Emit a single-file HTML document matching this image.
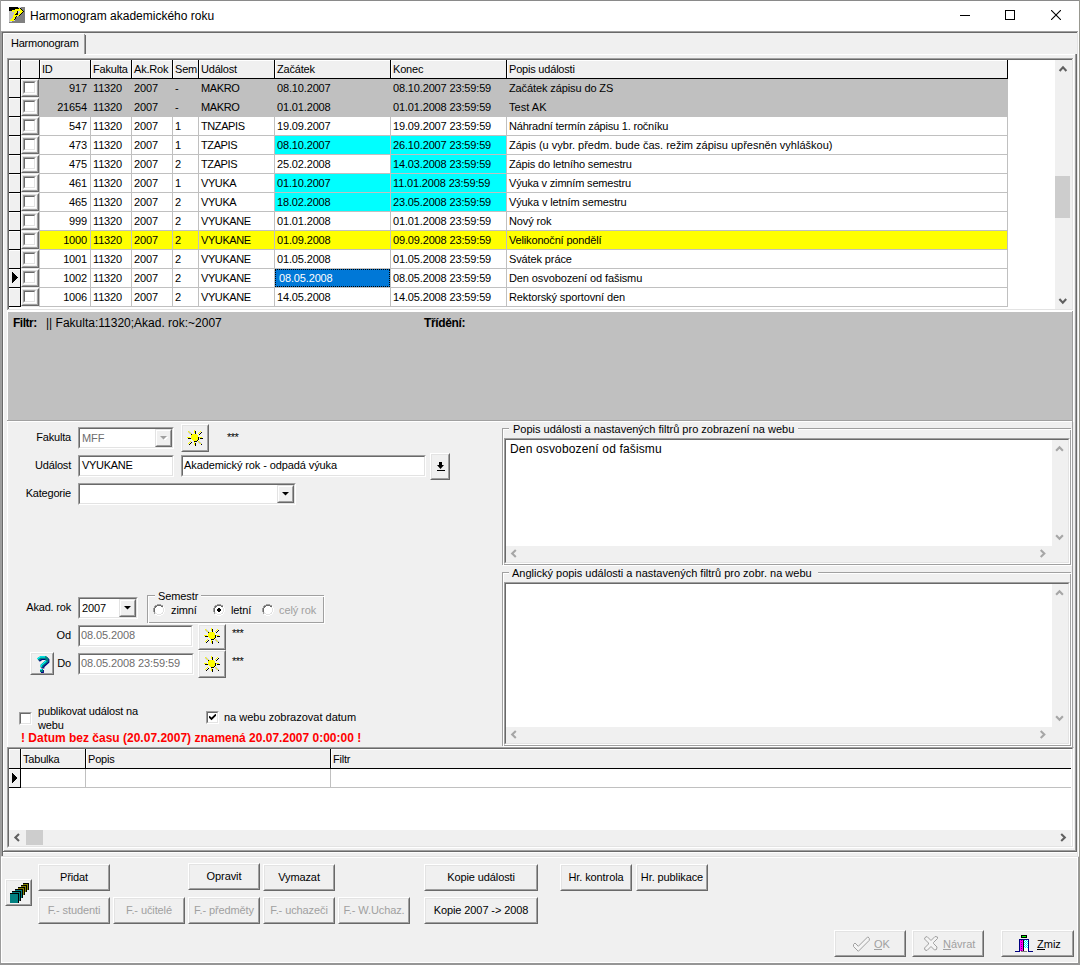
<!DOCTYPE html><html><head><meta charset="utf-8"><style>
html,body{margin:0;padding:0;width:1080px;height:965px;overflow:hidden;background:#f0f0f0}
body>div,body>svg{position:absolute;box-sizing:content-box}
.t{position:absolute;white-space:pre;font-family:"Liberation Sans",sans-serif;color:#000}
</style></head><body>
<div style="left:0px;top:0px;width:1080px;height:965px;background:#f0f0f0;"></div>
<div style="left:0px;top:0px;width:1080px;height:31px;background:#ffffff;"></div>
<div style="left:0px;top:0px;width:1080px;height:1px;background:#8a8a8a;"></div>
<div style="left:0px;top:0px;width:1px;height:965px;background:#9c9c9c;"></div>
<div style="left:1079px;top:0px;width:1px;height:965px;background:#989890;"></div>
<svg style="position:absolute;left:9px;top:7px" width="16" height="16" viewBox="0 0 16 16" shape-rendering="crispEdges"><path d="M0 0h1v1h-1zM1 0h1v1h-1zM2 0h1v1h-1zM3 0h1v1h-1zM4 0h1v1h-1zM5 0h1v1h-1zM6 0h1v1h-1zM7 0h1v1h-1zM8 0h1v1h-1zM0 1h1v1h-1zM1 1h1v1h-1zM2 1h1v1h-1zM3 1h1v1h-1zM4 1h1v1h-1zM5 1h1v1h-1zM6 1h1v1h-1zM7 1h1v1h-1zM8 1h1v1h-1zM9 1h1v1h-1zM11 1h1v1h-1zM0 2h1v1h-1zM1 2h1v1h-1zM2 2h1v1h-1zM3 2h1v1h-1zM4 2h1v1h-1zM5 2h1v1h-1zM12 2h1v1h-1zM0 3h1v1h-1zM1 3h1v1h-1zM2 3h1v1h-1zM13 3h1v1h-1zM8 4h1v1h-1zM14 4h1v1h-1zM8 5h1v1h-1zM13 5h1v1h-1zM7 6h1v1h-1zM8 6h1v1h-1zM12 6h1v1h-1zM6 7h1v1h-1zM7 7h1v1h-1zM8 7h1v1h-1zM11 7h1v1h-1zM10 8h1v1h-1zM7 9h1v1h-1zM6 10h1v1h-1zM6 11h1v1h-1zM5 12h1v1h-1z" fill="#000"/><path d="M10 1h1v1h-1zM6 2h1v1h-1zM7 2h1v1h-1zM8 2h1v1h-1zM9 2h1v1h-1zM10 2h1v1h-1zM11 2h1v1h-1zM3 3h1v1h-1zM4 3h1v1h-1zM5 3h1v1h-1zM6 3h1v1h-1zM7 3h1v1h-1zM8 3h1v1h-1zM9 3h1v1h-1zM10 3h1v1h-1zM11 3h1v1h-1zM12 3h1v1h-1zM3 4h1v1h-1zM4 4h1v1h-1zM6 4h1v1h-1zM7 4h1v1h-1zM11 4h1v1h-1zM12 4h1v1h-1zM13 4h1v1h-1zM5 5h1v1h-1zM6 5h1v1h-1zM7 5h1v1h-1zM11 5h1v1h-1zM12 5h1v1h-1zM5 6h1v1h-1zM6 6h1v1h-1zM10 6h1v1h-1zM11 6h1v1h-1zM5 7h1v1h-1zM9 7h1v1h-1zM10 7h1v1h-1zM4 8h1v1h-1zM5 8h1v1h-1zM6 8h1v1h-1zM7 8h1v1h-1zM8 8h1v1h-1zM9 8h1v1h-1zM4 9h1v1h-1zM5 9h1v1h-1zM6 9h1v1h-1zM4 10h1v1h-1zM5 10h1v1h-1zM3 11h1v1h-1zM4 11h1v1h-1zM5 11h1v1h-1zM2 12h1v1h-1zM3 12h1v1h-1zM4 12h1v1h-1zM1 13h1v1h-1zM2 13h1v1h-1zM3 13h1v1h-1zM4 13h1v1h-1z" fill="#ffff00"/><path d="M0 4h1v1h-1zM1 4h1v1h-1zM2 4h1v1h-1zM5 4h1v1h-1zM0 5h1v1h-1zM1 5h1v1h-1zM2 5h1v1h-1zM3 5h1v1h-1zM4 5h1v1h-1zM0 6h1v1h-1zM1 6h1v1h-1zM2 6h1v1h-1zM3 6h1v1h-1zM4 6h1v1h-1zM0 7h1v1h-1zM1 7h1v1h-1zM2 7h1v1h-1zM3 7h1v1h-1zM4 7h1v1h-1zM0 8h1v1h-1zM1 8h1v1h-1zM2 8h1v1h-1zM3 8h1v1h-1zM0 9h1v1h-1zM1 9h1v1h-1zM2 9h1v1h-1zM3 9h1v1h-1zM0 10h1v1h-1zM1 10h1v1h-1zM2 10h1v1h-1zM3 10h1v1h-1zM0 11h1v1h-1zM1 11h1v1h-1zM2 11h1v1h-1zM0 12h1v1h-1zM1 12h1v1h-1zM0 13h1v1h-1zM0 14h1v1h-1z" fill="#c0c0c0"/><path d="M12 0h1v1h-1zM13 0h1v1h-1zM14 0h1v1h-1zM15 0h1v1h-1zM12 1h1v1h-1zM13 1h1v1h-1zM14 1h1v1h-1zM15 1h1v1h-1zM13 2h1v1h-1zM14 2h1v1h-1zM15 2h1v1h-1zM14 3h1v1h-1zM15 3h1v1h-1zM15 4h1v1h-1zM14 5h1v1h-1zM15 5h1v1h-1zM13 6h1v1h-1zM14 6h1v1h-1zM15 6h1v1h-1zM12 7h1v1h-1zM13 7h1v1h-1zM14 7h1v1h-1zM15 7h1v1h-1zM11 8h1v1h-1zM12 8h1v1h-1zM13 8h1v1h-1zM14 8h1v1h-1zM15 8h1v1h-1zM9 9h1v1h-1zM10 9h1v1h-1zM11 9h1v1h-1zM12 9h1v1h-1zM13 9h1v1h-1zM14 9h1v1h-1zM15 9h1v1h-1zM7 10h1v1h-1zM8 10h1v1h-1zM9 10h1v1h-1zM10 10h1v1h-1zM11 10h1v1h-1zM12 10h1v1h-1zM13 10h1v1h-1zM14 10h1v1h-1zM15 10h1v1h-1zM7 11h1v1h-1zM8 11h1v1h-1zM9 11h1v1h-1zM10 11h1v1h-1zM11 11h1v1h-1zM12 11h1v1h-1zM13 11h1v1h-1zM14 11h1v1h-1zM15 11h1v1h-1zM6 12h1v1h-1zM7 12h1v1h-1zM8 12h1v1h-1zM9 12h1v1h-1zM10 12h1v1h-1zM11 12h1v1h-1zM12 12h1v1h-1zM13 12h1v1h-1zM14 12h1v1h-1zM15 12h1v1h-1zM6 13h1v1h-1zM7 13h1v1h-1zM8 13h1v1h-1zM9 13h1v1h-1zM10 13h1v1h-1zM11 13h1v1h-1zM12 13h1v1h-1zM13 13h1v1h-1zM14 13h1v1h-1zM15 13h1v1h-1zM3 14h1v1h-1zM4 14h1v1h-1zM5 14h1v1h-1zM6 14h1v1h-1zM7 14h1v1h-1zM8 14h1v1h-1zM9 14h1v1h-1zM10 14h1v1h-1zM11 14h1v1h-1zM12 14h1v1h-1zM13 14h1v1h-1zM14 14h1v1h-1zM15 14h1v1h-1zM0 15h1v1h-1zM1 15h1v1h-1zM2 15h1v1h-1zM3 15h1v1h-1zM4 15h1v1h-1zM5 15h1v1h-1zM6 15h1v1h-1zM7 15h1v1h-1zM8 15h1v1h-1zM9 15h1v1h-1zM10 15h1v1h-1zM11 15h1v1h-1zM12 15h1v1h-1zM13 15h1v1h-1zM14 15h1v1h-1zM15 15h1v1h-1z" fill="#808080"/><path d="M9 0h1v1h-1zM10 0h1v1h-1zM11 0h1v1h-1zM9 4h1v1h-1zM10 4h1v1h-1zM9 5h1v1h-1zM10 5h1v1h-1zM9 6h1v1h-1zM8 9h1v1h-1zM5 13h1v1h-1zM1 14h1v1h-1zM2 14h1v1h-1z" fill="#c8c8e8"/></svg>
<div class="t" style="left:30px;top:10px;font-size:12px;line-height:12px;color:#000;font-weight:normal;">Harmonogram akademického roku</div>
<div style="left:960px;top:15px;width:10px;height:1px;background:#000;"></div>
<div style="left:1005px;top:10px;width:8px;height:8px;border:1px solid #000"></div>
<svg style="position:absolute;left:1051px;top:10px" width="10" height="10" viewBox="0 0 10 10" shape-rendering="crispEdges"><g shape-rendering="geometricPrecision"><path d="M0 0 L10 10 M10 0 L0 10" stroke="#000" stroke-width="1.1"/></g></svg>
<div style="left:1px;top:31px;width:1078px;height:1px;background:#a0a0a0;"></div>
<div style="left:2px;top:32px;width:1076px;height:1px;background:#696969;"></div>
<div style="left:1px;top:31px;width:1px;height:934px;background:#a0a0a0;"></div>
<div style="left:2px;top:32px;width:1px;height:932px;background:#696969;"></div>
<div style="left:1078px;top:31px;width:1px;height:934px;background:#ffffff;"></div>
<div style="left:1077px;top:32px;width:1px;height:932px;background:#e3e3e3;"></div>
<div style="left:3px;top:54px;width:1074px;height:1px;background:#ffffff;"></div>
<div style="left:3px;top:54px;width:1px;height:797px;background:#ffffff;"></div>
<div style="left:1075px;top:54px;width:1px;height:797px;background:#a0a0a0;"></div>
<div style="left:1076px;top:54px;width:1px;height:798px;background:#696969;"></div>
<div style="left:4px;top:850px;width:1072px;height:1px;background:#a0a0a0;"></div>
<div style="left:3px;top:851px;width:1074px;height:1px;background:#696969;"></div>
<div style="left:4px;top:34px;width:81px;height:21px;background:#f0f0f0;"></div>
<div style="left:4px;top:33px;width:80px;height:1px;background:#ffffff;"></div>
<div style="left:3px;top:34px;width:1px;height:21px;background:#ffffff;"></div>
<div style="left:84px;top:34px;width:1px;height:20px;background:#a0a0a0;"></div>
<div style="left:85px;top:35px;width:1px;height:19px;background:#696969;"></div>
<div class="t" style="left:11px;top:38px;font-size:11px;line-height:11px;color:#000;font-weight:normal;letter-spacing:-0.25px;">Harmonogram</div>
<div style="left:7px;top:58px;width:1067px;height:1px;background:#a0a0a0;"></div>
<div style="left:7px;top:58px;width:1px;height:252px;background:#a0a0a0;"></div>
<div style="left:8px;top:59px;width:1065px;height:1px;background:#696969;"></div>
<div style="left:8px;top:59px;width:1px;height:250px;background:#696969;"></div>
<div style="left:8px;top:309px;width:1065px;height:1px;background:#e3e3e3;"></div>
<div style="left:1072px;top:59px;width:1px;height:251px;background:#e3e3e3;"></div>
<div style="left:7px;top:310px;width:1067px;height:1px;background:#ffffff;"></div>
<div style="left:1073px;top:58px;width:1px;height:253px;background:#ffffff;"></div>
<div style="left:9px;top:60px;width:1046px;height:249px;background:#ffffff;"></div>
<div style="left:9px;top:60px;width:11px;height:18px;background:#f0f0f0;"></div>
<div style="left:9px;top:60px;width:11px;height:1px;background:#ffffff;"></div>
<div style="left:9px;top:60px;width:1px;height:18px;background:#ffffff;"></div>
<div style="left:20px;top:60px;width:1px;height:19px;background:#000;"></div>
<div style="left:21px;top:60px;width:18px;height:18px;background:#f0f0f0;"></div>
<div style="left:21px;top:60px;width:18px;height:1px;background:#ffffff;"></div>
<div style="left:21px;top:60px;width:1px;height:18px;background:#ffffff;"></div>
<div style="left:39px;top:60px;width:1px;height:19px;background:#000;"></div>
<div style="left:40px;top:60px;width:50px;height:18px;background:#f0f0f0;"></div>
<div style="left:40px;top:60px;width:50px;height:1px;background:#ffffff;"></div>
<div style="left:40px;top:60px;width:1px;height:18px;background:#ffffff;"></div>
<div style="left:90px;top:60px;width:1px;height:19px;background:#000;"></div>
<div class="t" style="left:42px;top:64px;font-size:11px;line-height:11px;color:#000;font-weight:normal;letter-spacing:-0.2px;">ID</div>
<div style="left:91px;top:60px;width:40px;height:18px;background:#f0f0f0;"></div>
<div style="left:91px;top:60px;width:40px;height:1px;background:#ffffff;"></div>
<div style="left:91px;top:60px;width:1px;height:18px;background:#ffffff;"></div>
<div style="left:131px;top:60px;width:1px;height:19px;background:#000;"></div>
<div class="t" style="left:93px;top:64px;font-size:11px;line-height:11px;color:#000;font-weight:normal;letter-spacing:-0.2px;">Fakulta</div>
<div style="left:132px;top:60px;width:40px;height:18px;background:#f0f0f0;"></div>
<div style="left:132px;top:60px;width:40px;height:1px;background:#ffffff;"></div>
<div style="left:132px;top:60px;width:1px;height:18px;background:#ffffff;"></div>
<div style="left:172px;top:60px;width:1px;height:19px;background:#000;"></div>
<div class="t" style="left:134px;top:64px;font-size:11px;line-height:11px;color:#000;font-weight:normal;letter-spacing:-0.2px;">Ak.Rok</div>
<div style="left:173px;top:60px;width:25px;height:18px;background:#f0f0f0;"></div>
<div style="left:173px;top:60px;width:25px;height:1px;background:#ffffff;"></div>
<div style="left:173px;top:60px;width:1px;height:18px;background:#ffffff;"></div>
<div style="left:198px;top:60px;width:1px;height:19px;background:#000;"></div>
<div class="t" style="left:175px;top:64px;font-size:11px;line-height:11px;color:#000;font-weight:normal;letter-spacing:-0.2px;">Sem</div>
<div style="left:199px;top:60px;width:75px;height:18px;background:#f0f0f0;"></div>
<div style="left:199px;top:60px;width:75px;height:1px;background:#ffffff;"></div>
<div style="left:199px;top:60px;width:1px;height:18px;background:#ffffff;"></div>
<div style="left:274px;top:60px;width:1px;height:19px;background:#000;"></div>
<div class="t" style="left:201px;top:64px;font-size:11px;line-height:11px;color:#000;font-weight:normal;letter-spacing:-0.2px;">Událost</div>
<div style="left:275px;top:60px;width:115px;height:18px;background:#f0f0f0;"></div>
<div style="left:275px;top:60px;width:115px;height:1px;background:#ffffff;"></div>
<div style="left:275px;top:60px;width:1px;height:18px;background:#ffffff;"></div>
<div style="left:390px;top:60px;width:1px;height:19px;background:#000;"></div>
<div class="t" style="left:277px;top:64px;font-size:11px;line-height:11px;color:#000;font-weight:normal;letter-spacing:-0.2px;">Začátek</div>
<div style="left:391px;top:60px;width:115px;height:18px;background:#f0f0f0;"></div>
<div style="left:391px;top:60px;width:115px;height:1px;background:#ffffff;"></div>
<div style="left:391px;top:60px;width:1px;height:18px;background:#ffffff;"></div>
<div style="left:506px;top:60px;width:1px;height:19px;background:#000;"></div>
<div class="t" style="left:393px;top:64px;font-size:11px;line-height:11px;color:#000;font-weight:normal;letter-spacing:-0.2px;">Konec</div>
<div style="left:507px;top:60px;width:500px;height:18px;background:#f0f0f0;"></div>
<div style="left:507px;top:60px;width:500px;height:1px;background:#ffffff;"></div>
<div style="left:507px;top:60px;width:1px;height:18px;background:#ffffff;"></div>
<div style="left:1007px;top:60px;width:1px;height:19px;background:#000;"></div>
<div class="t" style="left:509px;top:64px;font-size:11px;line-height:11px;color:#000;font-weight:normal;letter-spacing:-0.2px;">Popis události</div>
<div style="left:9px;top:78px;width:999px;height:1px;background:#000;"></div>
<div style="left:40px;top:79px;width:967px;height:18px;background:#c0c0c0;"></div>
<div style="left:39px;top:97px;width:969px;height:1px;background:#c0c0c0;"></div>
<div style="left:39px;top:79px;width:1px;height:19px;background:#c0c0c0;"></div>
<div style="left:90px;top:79px;width:1px;height:19px;background:#c0c0c0;"></div>
<div style="left:131px;top:79px;width:1px;height:19px;background:#c0c0c0;"></div>
<div style="left:172px;top:79px;width:1px;height:19px;background:#c0c0c0;"></div>
<div style="left:198px;top:79px;width:1px;height:19px;background:#c0c0c0;"></div>
<div style="left:274px;top:79px;width:1px;height:19px;background:#c0c0c0;"></div>
<div style="left:390px;top:79px;width:1px;height:19px;background:#c0c0c0;"></div>
<div style="left:506px;top:79px;width:1px;height:19px;background:#c0c0c0;"></div>
<div style="left:1007px;top:79px;width:1px;height:19px;background:#c0c0c0;"></div>
<div style="left:9px;top:79px;width:11px;height:18px;background:#f0f0f0;"></div>
<div style="left:9px;top:79px;width:11px;height:1px;background:#fff;"></div>
<div style="left:9px;top:79px;width:1px;height:18px;background:#fff;"></div>
<div style="left:20px;top:79px;width:1px;height:19px;background:#000;"></div>
<div style="left:9px;top:97px;width:12px;height:1px;background:#000;"></div>
<div style="left:21px;top:79px;width:18px;height:19px;background:#f0f0f0;"></div>
<div style="left:21px;top:79px;width:16px;height:16px;border:1px solid;border-color:#fff #696969 #696969 #fff;background:#f0f0f0"></div>
<div style="left:22px;top:80px;width:14px;height:14px;border:1px solid;border-color:#e3e3e3 #a0a0a0 #a0a0a0 #e3e3e3;background:#f0f0f0"></div>
<div style="left:21px;top:97px;width:18px;height:1px;background:#e8e8e8;"></div>
<div style="left:23px;top:81px;width:11px;height:11px;border:1px solid;border-color:#a0a0a0 #fff #fff #a0a0a0;background:#fff"></div>
<div style="left:24px;top:82px;width:9px;height:9px;border:1px solid;border-color:#696969 #e3e3e3 #e3e3e3 #696969;background:#fff"></div>
<div class="t" style="right:993px;top:83px;font-size:11px;line-height:11px;color:#000;letter-spacing:-0.15px;">917</div>
<div class="t" style="left:93px;top:83px;font-size:11px;line-height:11px;color:#000;font-weight:normal;letter-spacing:-0.15px;">11320</div>
<div class="t" style="left:134px;top:83px;font-size:11px;line-height:11px;color:#000;font-weight:normal;letter-spacing:-0.15px;">2007</div>
<div class="t" style="left:175px;top:83px;font-size:11px;line-height:11px;color:#000;font-weight:normal;letter-spacing:-0.15px;">-</div>
<div class="t" style="left:201px;top:83px;font-size:11px;line-height:11px;color:#000;font-weight:normal;letter-spacing:-0.4px;">MAKRO</div>
<div class="t" style="left:277px;top:83px;font-size:11px;line-height:11px;color:#000;font-weight:normal;letter-spacing:-0.15px;">08.10.2007</div>
<div class="t" style="left:393px;top:83px;font-size:11px;line-height:11px;color:#000;font-weight:normal;letter-spacing:-0.15px;">08.10.2007 23:59:59</div>
<div class="t" style="left:509px;top:83px;font-size:11px;line-height:11px;color:#000;font-weight:normal;letter-spacing:-0.11px;">Začátek zápisu do ZS</div>
<div style="left:40px;top:98px;width:967px;height:18px;background:#c0c0c0;"></div>
<div style="left:39px;top:116px;width:969px;height:1px;background:#c0c0c0;"></div>
<div style="left:39px;top:98px;width:1px;height:19px;background:#c0c0c0;"></div>
<div style="left:90px;top:98px;width:1px;height:19px;background:#c0c0c0;"></div>
<div style="left:131px;top:98px;width:1px;height:19px;background:#c0c0c0;"></div>
<div style="left:172px;top:98px;width:1px;height:19px;background:#c0c0c0;"></div>
<div style="left:198px;top:98px;width:1px;height:19px;background:#c0c0c0;"></div>
<div style="left:274px;top:98px;width:1px;height:19px;background:#c0c0c0;"></div>
<div style="left:390px;top:98px;width:1px;height:19px;background:#c0c0c0;"></div>
<div style="left:506px;top:98px;width:1px;height:19px;background:#c0c0c0;"></div>
<div style="left:1007px;top:98px;width:1px;height:19px;background:#c0c0c0;"></div>
<div style="left:9px;top:98px;width:11px;height:18px;background:#f0f0f0;"></div>
<div style="left:9px;top:98px;width:11px;height:1px;background:#fff;"></div>
<div style="left:9px;top:98px;width:1px;height:18px;background:#fff;"></div>
<div style="left:20px;top:98px;width:1px;height:19px;background:#000;"></div>
<div style="left:9px;top:116px;width:12px;height:1px;background:#000;"></div>
<div style="left:21px;top:98px;width:18px;height:19px;background:#f0f0f0;"></div>
<div style="left:21px;top:98px;width:16px;height:16px;border:1px solid;border-color:#fff #696969 #696969 #fff;background:#f0f0f0"></div>
<div style="left:22px;top:99px;width:14px;height:14px;border:1px solid;border-color:#e3e3e3 #a0a0a0 #a0a0a0 #e3e3e3;background:#f0f0f0"></div>
<div style="left:21px;top:116px;width:18px;height:1px;background:#e8e8e8;"></div>
<div style="left:23px;top:100px;width:11px;height:11px;border:1px solid;border-color:#a0a0a0 #fff #fff #a0a0a0;background:#fff"></div>
<div style="left:24px;top:101px;width:9px;height:9px;border:1px solid;border-color:#696969 #e3e3e3 #e3e3e3 #696969;background:#fff"></div>
<div class="t" style="right:993px;top:102px;font-size:11px;line-height:11px;color:#000;letter-spacing:-0.15px;">21654</div>
<div class="t" style="left:93px;top:102px;font-size:11px;line-height:11px;color:#000;font-weight:normal;letter-spacing:-0.15px;">11320</div>
<div class="t" style="left:134px;top:102px;font-size:11px;line-height:11px;color:#000;font-weight:normal;letter-spacing:-0.15px;">2007</div>
<div class="t" style="left:175px;top:102px;font-size:11px;line-height:11px;color:#000;font-weight:normal;letter-spacing:-0.15px;">-</div>
<div class="t" style="left:201px;top:102px;font-size:11px;line-height:11px;color:#000;font-weight:normal;letter-spacing:-0.4px;">MAKRO</div>
<div class="t" style="left:277px;top:102px;font-size:11px;line-height:11px;color:#000;font-weight:normal;letter-spacing:-0.15px;">01.01.2008</div>
<div class="t" style="left:393px;top:102px;font-size:11px;line-height:11px;color:#000;font-weight:normal;letter-spacing:-0.15px;">01.01.2008 23:59:59</div>
<div class="t" style="left:509px;top:102px;font-size:11px;line-height:11px;color:#000;font-weight:normal;letter-spacing:0.04px;">Test AK</div>
<div style="left:40px;top:117px;width:967px;height:18px;background:#ffffff;"></div>
<div style="left:39px;top:135px;width:969px;height:1px;background:#c0c0c0;"></div>
<div style="left:39px;top:117px;width:1px;height:19px;background:#c0c0c0;"></div>
<div style="left:90px;top:117px;width:1px;height:19px;background:#c0c0c0;"></div>
<div style="left:131px;top:117px;width:1px;height:19px;background:#c0c0c0;"></div>
<div style="left:172px;top:117px;width:1px;height:19px;background:#c0c0c0;"></div>
<div style="left:198px;top:117px;width:1px;height:19px;background:#c0c0c0;"></div>
<div style="left:274px;top:117px;width:1px;height:19px;background:#c0c0c0;"></div>
<div style="left:390px;top:117px;width:1px;height:19px;background:#c0c0c0;"></div>
<div style="left:506px;top:117px;width:1px;height:19px;background:#c0c0c0;"></div>
<div style="left:1007px;top:117px;width:1px;height:19px;background:#c0c0c0;"></div>
<div style="left:9px;top:117px;width:11px;height:18px;background:#f0f0f0;"></div>
<div style="left:9px;top:117px;width:11px;height:1px;background:#fff;"></div>
<div style="left:9px;top:117px;width:1px;height:18px;background:#fff;"></div>
<div style="left:20px;top:117px;width:1px;height:19px;background:#000;"></div>
<div style="left:9px;top:135px;width:12px;height:1px;background:#000;"></div>
<div style="left:21px;top:117px;width:18px;height:19px;background:#f0f0f0;"></div>
<div style="left:21px;top:117px;width:16px;height:16px;border:1px solid;border-color:#fff #696969 #696969 #fff;background:#f0f0f0"></div>
<div style="left:22px;top:118px;width:14px;height:14px;border:1px solid;border-color:#e3e3e3 #a0a0a0 #a0a0a0 #e3e3e3;background:#f0f0f0"></div>
<div style="left:21px;top:135px;width:18px;height:1px;background:#e8e8e8;"></div>
<div style="left:23px;top:119px;width:11px;height:11px;border:1px solid;border-color:#a0a0a0 #fff #fff #a0a0a0;background:#fff"></div>
<div style="left:24px;top:120px;width:9px;height:9px;border:1px solid;border-color:#696969 #e3e3e3 #e3e3e3 #696969;background:#fff"></div>
<div class="t" style="right:993px;top:121px;font-size:11px;line-height:11px;color:#000;letter-spacing:-0.15px;">547</div>
<div class="t" style="left:93px;top:121px;font-size:11px;line-height:11px;color:#000;font-weight:normal;letter-spacing:-0.15px;">11320</div>
<div class="t" style="left:134px;top:121px;font-size:11px;line-height:11px;color:#000;font-weight:normal;letter-spacing:-0.15px;">2007</div>
<div class="t" style="left:175px;top:121px;font-size:11px;line-height:11px;color:#000;font-weight:normal;letter-spacing:-0.15px;">1</div>
<div class="t" style="left:201px;top:121px;font-size:11px;line-height:11px;color:#000;font-weight:normal;letter-spacing:-0.4px;">TNZAPIS</div>
<div class="t" style="left:277px;top:121px;font-size:11px;line-height:11px;color:#000;font-weight:normal;letter-spacing:-0.15px;">19.09.2007</div>
<div class="t" style="left:393px;top:121px;font-size:11px;line-height:11px;color:#000;font-weight:normal;letter-spacing:-0.15px;">19.09.2007 23:59:59</div>
<div class="t" style="left:509px;top:121px;font-size:11px;line-height:11px;color:#000;font-weight:normal;letter-spacing:-0.2px;">Náhradní termín zápisu 1. ročníku</div>
<div style="left:40px;top:136px;width:967px;height:18px;background:#ffffff;"></div>
<div style="left:39px;top:154px;width:969px;height:1px;background:#c0c0c0;"></div>
<div style="left:39px;top:136px;width:1px;height:19px;background:#c0c0c0;"></div>
<div style="left:90px;top:136px;width:1px;height:19px;background:#c0c0c0;"></div>
<div style="left:131px;top:136px;width:1px;height:19px;background:#c0c0c0;"></div>
<div style="left:172px;top:136px;width:1px;height:19px;background:#c0c0c0;"></div>
<div style="left:198px;top:136px;width:1px;height:19px;background:#c0c0c0;"></div>
<div style="left:274px;top:136px;width:1px;height:19px;background:#c0c0c0;"></div>
<div style="left:390px;top:136px;width:1px;height:19px;background:#c0c0c0;"></div>
<div style="left:506px;top:136px;width:1px;height:19px;background:#c0c0c0;"></div>
<div style="left:1007px;top:136px;width:1px;height:19px;background:#c0c0c0;"></div>
<div style="left:275px;top:136px;width:115px;height:18px;background:#00ffff;"></div>
<div style="left:391px;top:136px;width:115px;height:18px;background:#00ffff;"></div>
<div style="left:9px;top:136px;width:11px;height:18px;background:#f0f0f0;"></div>
<div style="left:9px;top:136px;width:11px;height:1px;background:#fff;"></div>
<div style="left:9px;top:136px;width:1px;height:18px;background:#fff;"></div>
<div style="left:20px;top:136px;width:1px;height:19px;background:#000;"></div>
<div style="left:9px;top:154px;width:12px;height:1px;background:#000;"></div>
<div style="left:21px;top:136px;width:18px;height:19px;background:#f0f0f0;"></div>
<div style="left:21px;top:136px;width:16px;height:16px;border:1px solid;border-color:#fff #696969 #696969 #fff;background:#f0f0f0"></div>
<div style="left:22px;top:137px;width:14px;height:14px;border:1px solid;border-color:#e3e3e3 #a0a0a0 #a0a0a0 #e3e3e3;background:#f0f0f0"></div>
<div style="left:21px;top:154px;width:18px;height:1px;background:#e8e8e8;"></div>
<div style="left:23px;top:138px;width:11px;height:11px;border:1px solid;border-color:#a0a0a0 #fff #fff #a0a0a0;background:#fff"></div>
<div style="left:24px;top:139px;width:9px;height:9px;border:1px solid;border-color:#696969 #e3e3e3 #e3e3e3 #696969;background:#fff"></div>
<div class="t" style="right:993px;top:140px;font-size:11px;line-height:11px;color:#000;letter-spacing:-0.15px;">473</div>
<div class="t" style="left:93px;top:140px;font-size:11px;line-height:11px;color:#000;font-weight:normal;letter-spacing:-0.15px;">11320</div>
<div class="t" style="left:134px;top:140px;font-size:11px;line-height:11px;color:#000;font-weight:normal;letter-spacing:-0.15px;">2007</div>
<div class="t" style="left:175px;top:140px;font-size:11px;line-height:11px;color:#000;font-weight:normal;letter-spacing:-0.15px;">1</div>
<div class="t" style="left:201px;top:140px;font-size:11px;line-height:11px;color:#000;font-weight:normal;letter-spacing:-0.4px;">TZAPIS</div>
<div class="t" style="left:277px;top:140px;font-size:11px;line-height:11px;color:#000;font-weight:normal;letter-spacing:-0.15px;">08.10.2007</div>
<div class="t" style="left:393px;top:140px;font-size:11px;line-height:11px;color:#000;font-weight:normal;letter-spacing:-0.15px;">26.10.2007 23:59:59</div>
<div class="t" style="left:509px;top:140px;font-size:11px;line-height:11px;color:#000;font-weight:normal;letter-spacing:0.0px;">Zápis (u vybr. předm. bude čas. režim zápisu upřesněn vyhláškou)</div>
<div style="left:40px;top:155px;width:967px;height:18px;background:#ffffff;"></div>
<div style="left:39px;top:173px;width:969px;height:1px;background:#c0c0c0;"></div>
<div style="left:39px;top:155px;width:1px;height:19px;background:#c0c0c0;"></div>
<div style="left:90px;top:155px;width:1px;height:19px;background:#c0c0c0;"></div>
<div style="left:131px;top:155px;width:1px;height:19px;background:#c0c0c0;"></div>
<div style="left:172px;top:155px;width:1px;height:19px;background:#c0c0c0;"></div>
<div style="left:198px;top:155px;width:1px;height:19px;background:#c0c0c0;"></div>
<div style="left:274px;top:155px;width:1px;height:19px;background:#c0c0c0;"></div>
<div style="left:390px;top:155px;width:1px;height:19px;background:#c0c0c0;"></div>
<div style="left:506px;top:155px;width:1px;height:19px;background:#c0c0c0;"></div>
<div style="left:1007px;top:155px;width:1px;height:19px;background:#c0c0c0;"></div>
<div style="left:391px;top:155px;width:115px;height:18px;background:#00ffff;"></div>
<div style="left:9px;top:155px;width:11px;height:18px;background:#f0f0f0;"></div>
<div style="left:9px;top:155px;width:11px;height:1px;background:#fff;"></div>
<div style="left:9px;top:155px;width:1px;height:18px;background:#fff;"></div>
<div style="left:20px;top:155px;width:1px;height:19px;background:#000;"></div>
<div style="left:9px;top:173px;width:12px;height:1px;background:#000;"></div>
<div style="left:21px;top:155px;width:18px;height:19px;background:#f0f0f0;"></div>
<div style="left:21px;top:155px;width:16px;height:16px;border:1px solid;border-color:#fff #696969 #696969 #fff;background:#f0f0f0"></div>
<div style="left:22px;top:156px;width:14px;height:14px;border:1px solid;border-color:#e3e3e3 #a0a0a0 #a0a0a0 #e3e3e3;background:#f0f0f0"></div>
<div style="left:21px;top:173px;width:18px;height:1px;background:#e8e8e8;"></div>
<div style="left:23px;top:157px;width:11px;height:11px;border:1px solid;border-color:#a0a0a0 #fff #fff #a0a0a0;background:#fff"></div>
<div style="left:24px;top:158px;width:9px;height:9px;border:1px solid;border-color:#696969 #e3e3e3 #e3e3e3 #696969;background:#fff"></div>
<div class="t" style="right:993px;top:159px;font-size:11px;line-height:11px;color:#000;letter-spacing:-0.15px;">475</div>
<div class="t" style="left:93px;top:159px;font-size:11px;line-height:11px;color:#000;font-weight:normal;letter-spacing:-0.15px;">11320</div>
<div class="t" style="left:134px;top:159px;font-size:11px;line-height:11px;color:#000;font-weight:normal;letter-spacing:-0.15px;">2007</div>
<div class="t" style="left:175px;top:159px;font-size:11px;line-height:11px;color:#000;font-weight:normal;letter-spacing:-0.15px;">2</div>
<div class="t" style="left:201px;top:159px;font-size:11px;line-height:11px;color:#000;font-weight:normal;letter-spacing:-0.4px;">TZAPIS</div>
<div class="t" style="left:277px;top:159px;font-size:11px;line-height:11px;color:#000;font-weight:normal;letter-spacing:-0.15px;">25.02.2008</div>
<div class="t" style="left:393px;top:159px;font-size:11px;line-height:11px;color:#000;font-weight:normal;letter-spacing:-0.15px;">14.03.2008 23:59:59</div>
<div class="t" style="left:509px;top:159px;font-size:11px;line-height:11px;color:#000;font-weight:normal;letter-spacing:-0.15px;">Zápis do letního semestru</div>
<div style="left:40px;top:174px;width:967px;height:18px;background:#ffffff;"></div>
<div style="left:39px;top:192px;width:969px;height:1px;background:#c0c0c0;"></div>
<div style="left:39px;top:174px;width:1px;height:19px;background:#c0c0c0;"></div>
<div style="left:90px;top:174px;width:1px;height:19px;background:#c0c0c0;"></div>
<div style="left:131px;top:174px;width:1px;height:19px;background:#c0c0c0;"></div>
<div style="left:172px;top:174px;width:1px;height:19px;background:#c0c0c0;"></div>
<div style="left:198px;top:174px;width:1px;height:19px;background:#c0c0c0;"></div>
<div style="left:274px;top:174px;width:1px;height:19px;background:#c0c0c0;"></div>
<div style="left:390px;top:174px;width:1px;height:19px;background:#c0c0c0;"></div>
<div style="left:506px;top:174px;width:1px;height:19px;background:#c0c0c0;"></div>
<div style="left:1007px;top:174px;width:1px;height:19px;background:#c0c0c0;"></div>
<div style="left:275px;top:174px;width:115px;height:18px;background:#00ffff;"></div>
<div style="left:391px;top:174px;width:115px;height:18px;background:#00ffff;"></div>
<div style="left:9px;top:174px;width:11px;height:18px;background:#f0f0f0;"></div>
<div style="left:9px;top:174px;width:11px;height:1px;background:#fff;"></div>
<div style="left:9px;top:174px;width:1px;height:18px;background:#fff;"></div>
<div style="left:20px;top:174px;width:1px;height:19px;background:#000;"></div>
<div style="left:9px;top:192px;width:12px;height:1px;background:#000;"></div>
<div style="left:21px;top:174px;width:18px;height:19px;background:#f0f0f0;"></div>
<div style="left:21px;top:174px;width:16px;height:16px;border:1px solid;border-color:#fff #696969 #696969 #fff;background:#f0f0f0"></div>
<div style="left:22px;top:175px;width:14px;height:14px;border:1px solid;border-color:#e3e3e3 #a0a0a0 #a0a0a0 #e3e3e3;background:#f0f0f0"></div>
<div style="left:21px;top:192px;width:18px;height:1px;background:#e8e8e8;"></div>
<div style="left:23px;top:176px;width:11px;height:11px;border:1px solid;border-color:#a0a0a0 #fff #fff #a0a0a0;background:#fff"></div>
<div style="left:24px;top:177px;width:9px;height:9px;border:1px solid;border-color:#696969 #e3e3e3 #e3e3e3 #696969;background:#fff"></div>
<div class="t" style="right:993px;top:178px;font-size:11px;line-height:11px;color:#000;letter-spacing:-0.15px;">461</div>
<div class="t" style="left:93px;top:178px;font-size:11px;line-height:11px;color:#000;font-weight:normal;letter-spacing:-0.15px;">11320</div>
<div class="t" style="left:134px;top:178px;font-size:11px;line-height:11px;color:#000;font-weight:normal;letter-spacing:-0.15px;">2007</div>
<div class="t" style="left:175px;top:178px;font-size:11px;line-height:11px;color:#000;font-weight:normal;letter-spacing:-0.15px;">1</div>
<div class="t" style="left:201px;top:178px;font-size:11px;line-height:11px;color:#000;font-weight:normal;letter-spacing:-0.4px;">VYUKA</div>
<div class="t" style="left:277px;top:178px;font-size:11px;line-height:11px;color:#000;font-weight:normal;letter-spacing:-0.15px;">01.10.2007</div>
<div class="t" style="left:393px;top:178px;font-size:11px;line-height:11px;color:#000;font-weight:normal;letter-spacing:-0.15px;">11.01.2008 23:59:59</div>
<div class="t" style="left:509px;top:178px;font-size:11px;line-height:11px;color:#000;font-weight:normal;letter-spacing:-0.175px;">Výuka v zimním semestru</div>
<div style="left:40px;top:193px;width:967px;height:18px;background:#ffffff;"></div>
<div style="left:39px;top:211px;width:969px;height:1px;background:#c0c0c0;"></div>
<div style="left:39px;top:193px;width:1px;height:19px;background:#c0c0c0;"></div>
<div style="left:90px;top:193px;width:1px;height:19px;background:#c0c0c0;"></div>
<div style="left:131px;top:193px;width:1px;height:19px;background:#c0c0c0;"></div>
<div style="left:172px;top:193px;width:1px;height:19px;background:#c0c0c0;"></div>
<div style="left:198px;top:193px;width:1px;height:19px;background:#c0c0c0;"></div>
<div style="left:274px;top:193px;width:1px;height:19px;background:#c0c0c0;"></div>
<div style="left:390px;top:193px;width:1px;height:19px;background:#c0c0c0;"></div>
<div style="left:506px;top:193px;width:1px;height:19px;background:#c0c0c0;"></div>
<div style="left:1007px;top:193px;width:1px;height:19px;background:#c0c0c0;"></div>
<div style="left:275px;top:193px;width:115px;height:18px;background:#00ffff;"></div>
<div style="left:391px;top:193px;width:115px;height:18px;background:#00ffff;"></div>
<div style="left:9px;top:193px;width:11px;height:18px;background:#f0f0f0;"></div>
<div style="left:9px;top:193px;width:11px;height:1px;background:#fff;"></div>
<div style="left:9px;top:193px;width:1px;height:18px;background:#fff;"></div>
<div style="left:20px;top:193px;width:1px;height:19px;background:#000;"></div>
<div style="left:9px;top:211px;width:12px;height:1px;background:#000;"></div>
<div style="left:21px;top:193px;width:18px;height:19px;background:#f0f0f0;"></div>
<div style="left:21px;top:193px;width:16px;height:16px;border:1px solid;border-color:#fff #696969 #696969 #fff;background:#f0f0f0"></div>
<div style="left:22px;top:194px;width:14px;height:14px;border:1px solid;border-color:#e3e3e3 #a0a0a0 #a0a0a0 #e3e3e3;background:#f0f0f0"></div>
<div style="left:21px;top:211px;width:18px;height:1px;background:#e8e8e8;"></div>
<div style="left:23px;top:195px;width:11px;height:11px;border:1px solid;border-color:#a0a0a0 #fff #fff #a0a0a0;background:#fff"></div>
<div style="left:24px;top:196px;width:9px;height:9px;border:1px solid;border-color:#696969 #e3e3e3 #e3e3e3 #696969;background:#fff"></div>
<div class="t" style="right:993px;top:197px;font-size:11px;line-height:11px;color:#000;letter-spacing:-0.15px;">465</div>
<div class="t" style="left:93px;top:197px;font-size:11px;line-height:11px;color:#000;font-weight:normal;letter-spacing:-0.15px;">11320</div>
<div class="t" style="left:134px;top:197px;font-size:11px;line-height:11px;color:#000;font-weight:normal;letter-spacing:-0.15px;">2007</div>
<div class="t" style="left:175px;top:197px;font-size:11px;line-height:11px;color:#000;font-weight:normal;letter-spacing:-0.15px;">2</div>
<div class="t" style="left:201px;top:197px;font-size:11px;line-height:11px;color:#000;font-weight:normal;letter-spacing:-0.4px;">VYUKA</div>
<div class="t" style="left:277px;top:197px;font-size:11px;line-height:11px;color:#000;font-weight:normal;letter-spacing:-0.15px;">18.02.2008</div>
<div class="t" style="left:393px;top:197px;font-size:11px;line-height:11px;color:#000;font-weight:normal;letter-spacing:-0.15px;">23.05.2008 23:59:59</div>
<div class="t" style="left:509px;top:197px;font-size:11px;line-height:11px;color:#000;font-weight:normal;letter-spacing:-0.123px;">Výuka v letním semestru</div>
<div style="left:40px;top:212px;width:967px;height:18px;background:#ffffff;"></div>
<div style="left:39px;top:230px;width:969px;height:1px;background:#c0c0c0;"></div>
<div style="left:39px;top:212px;width:1px;height:19px;background:#c0c0c0;"></div>
<div style="left:90px;top:212px;width:1px;height:19px;background:#c0c0c0;"></div>
<div style="left:131px;top:212px;width:1px;height:19px;background:#c0c0c0;"></div>
<div style="left:172px;top:212px;width:1px;height:19px;background:#c0c0c0;"></div>
<div style="left:198px;top:212px;width:1px;height:19px;background:#c0c0c0;"></div>
<div style="left:274px;top:212px;width:1px;height:19px;background:#c0c0c0;"></div>
<div style="left:390px;top:212px;width:1px;height:19px;background:#c0c0c0;"></div>
<div style="left:506px;top:212px;width:1px;height:19px;background:#c0c0c0;"></div>
<div style="left:1007px;top:212px;width:1px;height:19px;background:#c0c0c0;"></div>
<div style="left:9px;top:212px;width:11px;height:18px;background:#f0f0f0;"></div>
<div style="left:9px;top:212px;width:11px;height:1px;background:#fff;"></div>
<div style="left:9px;top:212px;width:1px;height:18px;background:#fff;"></div>
<div style="left:20px;top:212px;width:1px;height:19px;background:#000;"></div>
<div style="left:9px;top:230px;width:12px;height:1px;background:#000;"></div>
<div style="left:21px;top:212px;width:18px;height:19px;background:#f0f0f0;"></div>
<div style="left:21px;top:212px;width:16px;height:16px;border:1px solid;border-color:#fff #696969 #696969 #fff;background:#f0f0f0"></div>
<div style="left:22px;top:213px;width:14px;height:14px;border:1px solid;border-color:#e3e3e3 #a0a0a0 #a0a0a0 #e3e3e3;background:#f0f0f0"></div>
<div style="left:21px;top:230px;width:18px;height:1px;background:#e8e8e8;"></div>
<div style="left:23px;top:214px;width:11px;height:11px;border:1px solid;border-color:#a0a0a0 #fff #fff #a0a0a0;background:#fff"></div>
<div style="left:24px;top:215px;width:9px;height:9px;border:1px solid;border-color:#696969 #e3e3e3 #e3e3e3 #696969;background:#fff"></div>
<div class="t" style="right:993px;top:216px;font-size:11px;line-height:11px;color:#000;letter-spacing:-0.15px;">999</div>
<div class="t" style="left:93px;top:216px;font-size:11px;line-height:11px;color:#000;font-weight:normal;letter-spacing:-0.15px;">11320</div>
<div class="t" style="left:134px;top:216px;font-size:11px;line-height:11px;color:#000;font-weight:normal;letter-spacing:-0.15px;">2007</div>
<div class="t" style="left:175px;top:216px;font-size:11px;line-height:11px;color:#000;font-weight:normal;letter-spacing:-0.15px;">2</div>
<div class="t" style="left:201px;top:216px;font-size:11px;line-height:11px;color:#000;font-weight:normal;letter-spacing:-0.4px;">VYUKANE</div>
<div class="t" style="left:277px;top:216px;font-size:11px;line-height:11px;color:#000;font-weight:normal;letter-spacing:-0.15px;">01.01.2008</div>
<div class="t" style="left:393px;top:216px;font-size:11px;line-height:11px;color:#000;font-weight:normal;letter-spacing:-0.15px;">01.01.2008 23:59:59</div>
<div class="t" style="left:509px;top:216px;font-size:11px;line-height:11px;color:#000;font-weight:normal;letter-spacing:-0.126px;">Nový rok</div>
<div style="left:40px;top:231px;width:967px;height:18px;background:#ffff00;"></div>
<div style="left:39px;top:249px;width:969px;height:1px;background:#c0c0c0;"></div>
<div style="left:39px;top:231px;width:1px;height:19px;background:#c0c0c0;"></div>
<div style="left:90px;top:231px;width:1px;height:19px;background:#c0c0c0;"></div>
<div style="left:131px;top:231px;width:1px;height:19px;background:#c0c0c0;"></div>
<div style="left:172px;top:231px;width:1px;height:19px;background:#c0c0c0;"></div>
<div style="left:198px;top:231px;width:1px;height:19px;background:#c0c0c0;"></div>
<div style="left:274px;top:231px;width:1px;height:19px;background:#c0c0c0;"></div>
<div style="left:390px;top:231px;width:1px;height:19px;background:#c0c0c0;"></div>
<div style="left:506px;top:231px;width:1px;height:19px;background:#c0c0c0;"></div>
<div style="left:1007px;top:231px;width:1px;height:19px;background:#c0c0c0;"></div>
<div style="left:9px;top:231px;width:11px;height:18px;background:#f0f0f0;"></div>
<div style="left:9px;top:231px;width:11px;height:1px;background:#fff;"></div>
<div style="left:9px;top:231px;width:1px;height:18px;background:#fff;"></div>
<div style="left:20px;top:231px;width:1px;height:19px;background:#000;"></div>
<div style="left:9px;top:249px;width:12px;height:1px;background:#000;"></div>
<div style="left:21px;top:231px;width:18px;height:19px;background:#f0f0f0;"></div>
<div style="left:21px;top:231px;width:16px;height:16px;border:1px solid;border-color:#fff #696969 #696969 #fff;background:#f0f0f0"></div>
<div style="left:22px;top:232px;width:14px;height:14px;border:1px solid;border-color:#e3e3e3 #a0a0a0 #a0a0a0 #e3e3e3;background:#f0f0f0"></div>
<div style="left:21px;top:249px;width:18px;height:1px;background:#e8e8e8;"></div>
<div style="left:23px;top:233px;width:11px;height:11px;border:1px solid;border-color:#a0a0a0 #fff #fff #a0a0a0;background:#fff"></div>
<div style="left:24px;top:234px;width:9px;height:9px;border:1px solid;border-color:#696969 #e3e3e3 #e3e3e3 #696969;background:#fff"></div>
<div class="t" style="right:993px;top:235px;font-size:11px;line-height:11px;color:#000;letter-spacing:-0.15px;">1000</div>
<div class="t" style="left:93px;top:235px;font-size:11px;line-height:11px;color:#000;font-weight:normal;letter-spacing:-0.15px;">11320</div>
<div class="t" style="left:134px;top:235px;font-size:11px;line-height:11px;color:#000;font-weight:normal;letter-spacing:-0.15px;">2007</div>
<div class="t" style="left:175px;top:235px;font-size:11px;line-height:11px;color:#000;font-weight:normal;letter-spacing:-0.15px;">2</div>
<div class="t" style="left:201px;top:235px;font-size:11px;line-height:11px;color:#000;font-weight:normal;letter-spacing:-0.4px;">VYUKANE</div>
<div class="t" style="left:277px;top:235px;font-size:11px;line-height:11px;color:#000;font-weight:normal;letter-spacing:-0.15px;">01.09.2008</div>
<div class="t" style="left:393px;top:235px;font-size:11px;line-height:11px;color:#000;font-weight:normal;letter-spacing:-0.15px;">09.09.2008 23:59:59</div>
<div class="t" style="left:509px;top:235px;font-size:11px;line-height:11px;color:#000;font-weight:normal;letter-spacing:-0.159px;">Velikonoční pondělí</div>
<div style="left:40px;top:250px;width:967px;height:18px;background:#ffffff;"></div>
<div style="left:39px;top:268px;width:969px;height:1px;background:#c0c0c0;"></div>
<div style="left:39px;top:250px;width:1px;height:19px;background:#c0c0c0;"></div>
<div style="left:90px;top:250px;width:1px;height:19px;background:#c0c0c0;"></div>
<div style="left:131px;top:250px;width:1px;height:19px;background:#c0c0c0;"></div>
<div style="left:172px;top:250px;width:1px;height:19px;background:#c0c0c0;"></div>
<div style="left:198px;top:250px;width:1px;height:19px;background:#c0c0c0;"></div>
<div style="left:274px;top:250px;width:1px;height:19px;background:#c0c0c0;"></div>
<div style="left:390px;top:250px;width:1px;height:19px;background:#c0c0c0;"></div>
<div style="left:506px;top:250px;width:1px;height:19px;background:#c0c0c0;"></div>
<div style="left:1007px;top:250px;width:1px;height:19px;background:#c0c0c0;"></div>
<div style="left:9px;top:250px;width:11px;height:18px;background:#f0f0f0;"></div>
<div style="left:9px;top:250px;width:11px;height:1px;background:#fff;"></div>
<div style="left:9px;top:250px;width:1px;height:18px;background:#fff;"></div>
<div style="left:20px;top:250px;width:1px;height:19px;background:#000;"></div>
<div style="left:9px;top:268px;width:12px;height:1px;background:#000;"></div>
<div style="left:21px;top:250px;width:18px;height:19px;background:#f0f0f0;"></div>
<div style="left:21px;top:250px;width:16px;height:16px;border:1px solid;border-color:#fff #696969 #696969 #fff;background:#f0f0f0"></div>
<div style="left:22px;top:251px;width:14px;height:14px;border:1px solid;border-color:#e3e3e3 #a0a0a0 #a0a0a0 #e3e3e3;background:#f0f0f0"></div>
<div style="left:21px;top:268px;width:18px;height:1px;background:#e8e8e8;"></div>
<div style="left:23px;top:252px;width:11px;height:11px;border:1px solid;border-color:#a0a0a0 #fff #fff #a0a0a0;background:#fff"></div>
<div style="left:24px;top:253px;width:9px;height:9px;border:1px solid;border-color:#696969 #e3e3e3 #e3e3e3 #696969;background:#fff"></div>
<div class="t" style="right:993px;top:254px;font-size:11px;line-height:11px;color:#000;letter-spacing:-0.15px;">1001</div>
<div class="t" style="left:93px;top:254px;font-size:11px;line-height:11px;color:#000;font-weight:normal;letter-spacing:-0.15px;">11320</div>
<div class="t" style="left:134px;top:254px;font-size:11px;line-height:11px;color:#000;font-weight:normal;letter-spacing:-0.15px;">2007</div>
<div class="t" style="left:175px;top:254px;font-size:11px;line-height:11px;color:#000;font-weight:normal;letter-spacing:-0.15px;">2</div>
<div class="t" style="left:201px;top:254px;font-size:11px;line-height:11px;color:#000;font-weight:normal;letter-spacing:-0.4px;">VYUKANE</div>
<div class="t" style="left:277px;top:254px;font-size:11px;line-height:11px;color:#000;font-weight:normal;letter-spacing:-0.15px;">01.05.2008</div>
<div class="t" style="left:393px;top:254px;font-size:11px;line-height:11px;color:#000;font-weight:normal;letter-spacing:-0.15px;">01.05.2008 23:59:59</div>
<div class="t" style="left:509px;top:254px;font-size:11px;line-height:11px;color:#000;font-weight:normal;letter-spacing:-0.117px;">Svátek práce</div>
<div style="left:40px;top:269px;width:967px;height:18px;background:#ffffff;"></div>
<div style="left:39px;top:287px;width:969px;height:1px;background:#c0c0c0;"></div>
<div style="left:39px;top:269px;width:1px;height:19px;background:#c0c0c0;"></div>
<div style="left:90px;top:269px;width:1px;height:19px;background:#c0c0c0;"></div>
<div style="left:131px;top:269px;width:1px;height:19px;background:#c0c0c0;"></div>
<div style="left:172px;top:269px;width:1px;height:19px;background:#c0c0c0;"></div>
<div style="left:198px;top:269px;width:1px;height:19px;background:#c0c0c0;"></div>
<div style="left:274px;top:269px;width:1px;height:19px;background:#c0c0c0;"></div>
<div style="left:390px;top:269px;width:1px;height:19px;background:#c0c0c0;"></div>
<div style="left:506px;top:269px;width:1px;height:19px;background:#c0c0c0;"></div>
<div style="left:1007px;top:269px;width:1px;height:19px;background:#c0c0c0;"></div>
<div style="left:275px;top:269px;width:115px;height:18px;background:#0078d7;"></div>
<div style="left:275px;top:269px;width:113px;height:16px;border:1px dotted #000"></div>
<div style="left:9px;top:269px;width:11px;height:18px;background:#f0f0f0;"></div>
<div style="left:9px;top:269px;width:11px;height:1px;background:#fff;"></div>
<div style="left:9px;top:269px;width:1px;height:18px;background:#fff;"></div>
<div style="left:20px;top:269px;width:1px;height:19px;background:#000;"></div>
<div style="left:9px;top:287px;width:12px;height:1px;background:#000;"></div>
<div style="left:21px;top:269px;width:18px;height:19px;background:#f0f0f0;"></div>
<div style="left:21px;top:269px;width:16px;height:16px;border:1px solid;border-color:#fff #696969 #696969 #fff;background:#f0f0f0"></div>
<div style="left:22px;top:270px;width:14px;height:14px;border:1px solid;border-color:#e3e3e3 #a0a0a0 #a0a0a0 #e3e3e3;background:#f0f0f0"></div>
<div style="left:21px;top:287px;width:18px;height:1px;background:#e8e8e8;"></div>
<div style="left:23px;top:271px;width:11px;height:11px;border:1px solid;border-color:#a0a0a0 #fff #fff #a0a0a0;background:#fff"></div>
<div style="left:24px;top:272px;width:9px;height:9px;border:1px solid;border-color:#696969 #e3e3e3 #e3e3e3 #696969;background:#fff"></div>
<svg style="position:absolute;left:12px;top:272px" width="7" height="11" viewBox="0 0 7 11" shape-rendering="crispEdges"><path d="M0 0 L6 5.5 L0 11 Z" fill="#000"/></svg>
<div class="t" style="right:993px;top:273px;font-size:11px;line-height:11px;color:#000;letter-spacing:-0.15px;">1002</div>
<div class="t" style="left:93px;top:273px;font-size:11px;line-height:11px;color:#000;font-weight:normal;letter-spacing:-0.15px;">11320</div>
<div class="t" style="left:134px;top:273px;font-size:11px;line-height:11px;color:#000;font-weight:normal;letter-spacing:-0.15px;">2007</div>
<div class="t" style="left:175px;top:273px;font-size:11px;line-height:11px;color:#000;font-weight:normal;letter-spacing:-0.15px;">2</div>
<div class="t" style="left:201px;top:273px;font-size:11px;line-height:11px;color:#000;font-weight:normal;letter-spacing:-0.4px;">VYUKANE</div>
<div class="t" style="left:279px;top:273px;font-size:11px;line-height:11px;color:#fff;font-weight:normal;letter-spacing:-0.15px;">08.05.2008</div>
<div class="t" style="left:393px;top:273px;font-size:11px;line-height:11px;color:#000;font-weight:normal;letter-spacing:-0.15px;">08.05.2008 23:59:59</div>
<div class="t" style="left:509px;top:273px;font-size:11px;line-height:11px;color:#000;font-weight:normal;letter-spacing:-0.102px;">Den osvobození od fašismu</div>
<div style="left:40px;top:288px;width:967px;height:18px;background:#ffffff;"></div>
<div style="left:39px;top:306px;width:969px;height:1px;background:#c0c0c0;"></div>
<div style="left:39px;top:288px;width:1px;height:19px;background:#c0c0c0;"></div>
<div style="left:90px;top:288px;width:1px;height:19px;background:#c0c0c0;"></div>
<div style="left:131px;top:288px;width:1px;height:19px;background:#c0c0c0;"></div>
<div style="left:172px;top:288px;width:1px;height:19px;background:#c0c0c0;"></div>
<div style="left:198px;top:288px;width:1px;height:19px;background:#c0c0c0;"></div>
<div style="left:274px;top:288px;width:1px;height:19px;background:#c0c0c0;"></div>
<div style="left:390px;top:288px;width:1px;height:19px;background:#c0c0c0;"></div>
<div style="left:506px;top:288px;width:1px;height:19px;background:#c0c0c0;"></div>
<div style="left:1007px;top:288px;width:1px;height:19px;background:#c0c0c0;"></div>
<div style="left:9px;top:288px;width:11px;height:18px;background:#f0f0f0;"></div>
<div style="left:9px;top:288px;width:11px;height:1px;background:#fff;"></div>
<div style="left:9px;top:288px;width:1px;height:18px;background:#fff;"></div>
<div style="left:20px;top:288px;width:1px;height:19px;background:#000;"></div>
<div style="left:9px;top:306px;width:12px;height:1px;background:#000;"></div>
<div style="left:21px;top:288px;width:18px;height:19px;background:#f0f0f0;"></div>
<div style="left:21px;top:288px;width:16px;height:16px;border:1px solid;border-color:#fff #696969 #696969 #fff;background:#f0f0f0"></div>
<div style="left:22px;top:289px;width:14px;height:14px;border:1px solid;border-color:#e3e3e3 #a0a0a0 #a0a0a0 #e3e3e3;background:#f0f0f0"></div>
<div style="left:21px;top:306px;width:18px;height:1px;background:#e8e8e8;"></div>
<div style="left:23px;top:290px;width:11px;height:11px;border:1px solid;border-color:#a0a0a0 #fff #fff #a0a0a0;background:#fff"></div>
<div style="left:24px;top:291px;width:9px;height:9px;border:1px solid;border-color:#696969 #e3e3e3 #e3e3e3 #696969;background:#fff"></div>
<div class="t" style="right:993px;top:292px;font-size:11px;line-height:11px;color:#000;letter-spacing:-0.15px;">1006</div>
<div class="t" style="left:93px;top:292px;font-size:11px;line-height:11px;color:#000;font-weight:normal;letter-spacing:-0.15px;">11320</div>
<div class="t" style="left:134px;top:292px;font-size:11px;line-height:11px;color:#000;font-weight:normal;letter-spacing:-0.15px;">2007</div>
<div class="t" style="left:175px;top:292px;font-size:11px;line-height:11px;color:#000;font-weight:normal;letter-spacing:-0.15px;">2</div>
<div class="t" style="left:201px;top:292px;font-size:11px;line-height:11px;color:#000;font-weight:normal;letter-spacing:-0.4px;">VYUKANE</div>
<div class="t" style="left:277px;top:292px;font-size:11px;line-height:11px;color:#000;font-weight:normal;letter-spacing:-0.15px;">14.05.2008</div>
<div class="t" style="left:393px;top:292px;font-size:11px;line-height:11px;color:#000;font-weight:normal;letter-spacing:-0.15px;">14.05.2008 23:59:59</div>
<div class="t" style="left:509px;top:292px;font-size:11px;line-height:11px;color:#000;font-weight:normal;letter-spacing:-0.114px;">Rektorský sportovní den</div>
<div style="left:1055px;top:60px;width:17px;height:249px;background:#f0f0f0;"></div>
<svg style="position:absolute;left:0;top:0" width="1080" height="965"><path d="M1059.60 71.00 L1063.00 67.40 L1066.40 71.00" stroke="#606060" stroke-width="2.1" fill="none"/></svg>
<svg style="position:absolute;left:0;top:0" width="1080" height="965"><path d="M1059.40 299.00 L1062.80 302.60 L1066.20 299.00" stroke="#606060" stroke-width="2.1" fill="none"/></svg>
<div style="left:1055px;top:176px;width:15px;height:42px;background:#cdcdcd;"></div>
<div style="left:7px;top:311px;width:1066px;height:110px;background:#c0c0c0;"></div>
<div style="left:7px;top:311px;width:1066px;height:1px;background:#ffffff;"></div>
<div style="left:7px;top:311px;width:1px;height:110px;background:#ffffff;"></div>
<div style="left:1072px;top:311px;width:1px;height:110px;background:#a0a0a0;"></div>
<div style="left:7px;top:420px;width:1066px;height:1px;background:#a0a0a0;"></div>
<div style="left:7px;top:421px;width:1067px;height:1px;background:#ffffff;"></div>
<div style="left:1073px;top:311px;width:1px;height:111px;background:#ffffff;"></div>
<div class="t" style="left:13px;top:317px;font-size:12px;line-height:12px;color:#000;font-weight:bold;letter-spacing:-0.5px;">Filtr:</div>
<div class="t" style="left:46px;top:317px;font-size:12px;line-height:12px;color:#000;font-weight:normal;letter-spacing:0px;">|| Fakulta:11320;Akad. rok:~2007</div>
<div class="t" style="left:424px;top:317px;font-size:12px;line-height:12px;color:#000;font-weight:bold;letter-spacing:-0.375px;">Třídění:</div>
<div style="left:1072px;top:421px;width:1px;height:326px;background:#a0a0a0;"></div>
<div style="left:7px;top:421px;width:1px;height:326px;background:#ffffff;"></div>
<div class="t" style="right:1009px;top:432px;font-size:11px;line-height:11px;color:#000;letter-spacing:-0.2px;">Fakulta</div>
<div class="t" style="right:1009px;top:460px;font-size:11px;line-height:11px;color:#000;letter-spacing:-0.2px;">Událost</div>
<div class="t" style="right:1009px;top:488px;font-size:11px;line-height:11px;color:#000;letter-spacing:-0.2px;">Kategorie</div>
<div style="left:78px;top:427px;width:94px;height:20px;border:1px solid;border-color:#a0a0a0 #fff #fff #a0a0a0;background:#fff"></div>
<div style="left:79px;top:428px;width:92px;height:18px;border:1px solid;border-color:#696969 #e3e3e3 #e3e3e3 #696969;background:#fff"></div>
<div style="left:155px;top:429px;width:15px;height:16px;border:1px solid;border-color:#e3e3e3 #696969 #696969 #e3e3e3;background:#f0f0f0"></div>
<div style="left:156px;top:430px;width:13px;height:14px;border:1px solid;border-color:#fff #a0a0a0 #a0a0a0 #fff;background:#f0f0f0"></div>
<svg style="position:absolute;left:160px;top:436px" width="8" height="5" viewBox="0 0 8 5" shape-rendering="crispEdges"><path d="M1 1 L8 1 L4.5 4.5 Z" fill="#fff"/><path d="M0 0 L7 0 L3.5 3.5 Z" fill="#a0a0a0" shape-rendering="geometricPrecision"/></svg>
<div class="t" style="left:82px;top:433px;font-size:11px;line-height:11px;color:#6d6d6d;font-weight:normal;letter-spacing:-0.1px;">MFF</div>
<div style="left:181px;top:424px;width:26px;height:26px;border:1px solid;border-color:#fff #696969 #696969 #fff;background:#f0f0f0"></div>
<div style="left:182px;top:425px;width:24px;height:24px;border:1px solid;border-color:#e3e3e3 #a0a0a0 #a0a0a0 #e3e3e3;background:#f0f0f0"></div>
<svg style="position:absolute;left:184px;top:427px" width="22" height="22" viewBox="0 0 22 22" shape-rendering="crispEdges"><path d="M5 4h1v1h-1zM6 5h1v1h-1zM7 6h1v1h-1zM15 14h1v1h-1zM16 15h1v1h-1zM17 16h1v1h-1zM4 5h1v1h-1zM5 6h1v1h-1zM14 15h1v1h-1zM15 16h1v1h-1z" fill="#c8c8e0"/><path d="M10 3h1v1h-1zM10 4h1v1h-1zM10 5h1v1h-1zM10 15h1v1h-1zM10 16h1v1h-1zM10 17h1v1h-1zM3 10h1v1h-1zM4 10h1v1h-1zM5 10h1v1h-1zM15 10h1v1h-1zM16 10h1v1h-1zM17 10h1v1h-1zM4 4h1v1h-1zM5 5h1v1h-1zM6 6h1v1h-1zM16 4h1v1h-1zM15 5h1v1h-1zM14 6h1v1h-1zM4 16h1v1h-1zM5 15h1v1h-1zM6 14h1v1h-1zM14 14h1v1h-1zM15 15h1v1h-1zM16 16h1v1h-1zM8 7h1v1h-1zM9 7h1v1h-1zM10 7h1v1h-1zM11 7h1v1h-1zM12 7h1v1h-1zM7 8h1v1h-1zM8 8h1v1h-1zM9 8h1v1h-1zM10 8h1v1h-1zM11 8h1v1h-1zM12 8h1v1h-1zM13 8h1v1h-1zM7 9h1v1h-1zM8 9h1v1h-1zM9 9h1v1h-1zM10 9h1v1h-1zM11 9h1v1h-1zM12 9h1v1h-1zM13 9h1v1h-1zM7 10h1v1h-1zM8 10h1v1h-1zM9 10h1v1h-1zM10 10h1v1h-1zM11 10h1v1h-1zM12 10h1v1h-1zM13 10h1v1h-1zM7 11h1v1h-1zM8 11h1v1h-1zM9 11h1v1h-1zM10 11h1v1h-1zM11 11h1v1h-1zM12 11h1v1h-1zM13 11h1v1h-1zM8 12h1v1h-1zM9 12h1v1h-1zM10 12h1v1h-1zM11 12h1v1h-1zM12 12h1v1h-1zM13 12h1v1h-1zM9 13h1v1h-1zM10 13h1v1h-1zM11 13h1v1h-1zM12 13h1v1h-1z" fill="#ffff00"/><path d="M11 4h1v1h-1zM11 5h1v1h-1zM11 6h1v1h-1zM11 16h1v1h-1zM11 17h1v1h-1zM11 18h1v1h-1zM4 11h1v1h-1zM5 11h1v1h-1zM6 11h1v1h-1zM16 11h1v1h-1zM17 11h1v1h-1zM18 11h1v1h-1zM7 7h1v1h-1zM17 5h1v1h-1zM16 6h1v1h-1zM15 7h1v1h-1zM5 17h1v1h-1zM6 16h1v1h-1zM7 15h1v1h-1zM17 17h1v1h-1zM14 10h1v1h-1zM14 11h1v1h-1zM14 12h1v1h-1zM13 13h1v1h-1zM12 14h1v1h-1zM11 14h1v1h-1zM10 14h1v1h-1z" fill="#000"/></svg>
<div class="t" style="left:227px;top:432px;font-size:11px;line-height:11px;color:#000;font-weight:normal;letter-spacing:-0.5px;">***</div>
<div style="left:78px;top:455px;width:94px;height:20px;border:1px solid;border-color:#a0a0a0 #fff #fff #a0a0a0;background:#fff"></div>
<div style="left:79px;top:456px;width:92px;height:18px;border:1px solid;border-color:#696969 #e3e3e3 #e3e3e3 #696969;background:#fff"></div>
<div class="t" style="left:82px;top:460px;font-size:11px;line-height:11px;color:#000;font-weight:normal;letter-spacing:-0.3px;">VYUKANE</div>
<div style="left:181px;top:455px;width:243px;height:20px;border:1px solid;border-color:#a0a0a0 #fff #fff #a0a0a0;background:#fff"></div>
<div style="left:182px;top:456px;width:241px;height:18px;border:1px solid;border-color:#696969 #e3e3e3 #e3e3e3 #696969;background:#fff"></div>
<div class="t" style="left:184px;top:460px;font-size:11px;line-height:11px;color:#000;font-weight:normal;letter-spacing:-0.1px;">Akademický rok - odpadá výuka</div>
<div style="left:430px;top:453px;width:18px;height:25px;border:1px solid;border-color:#fff #696969 #696969 #fff;background:#f0f0f0"></div>
<div style="left:431px;top:454px;width:16px;height:23px;border:1px solid;border-color:#e3e3e3 #a0a0a0 #a0a0a0 #e3e3e3;background:#f0f0f0"></div>
<svg style="position:absolute;left:437px;top:462px" width="8" height="10" viewBox="0 0 8 10" shape-rendering="crispEdges"><path d="M2 0 H5 V3 H7 L3.5 7 L0 3 H2 Z" fill="#000" shape-rendering="geometricPrecision"/><rect x="0" y="8" width="8" height="1" fill="#000"/></svg>
<div style="left:78px;top:483px;width:216px;height:20px;border:1px solid;border-color:#a0a0a0 #fff #fff #a0a0a0;background:#fff"></div>
<div style="left:79px;top:484px;width:214px;height:18px;border:1px solid;border-color:#696969 #e3e3e3 #e3e3e3 #696969;background:#fff"></div>
<div style="left:277px;top:485px;width:15px;height:16px;border:1px solid;border-color:#e3e3e3 #696969 #696969 #e3e3e3;background:#f0f0f0"></div>
<div style="left:278px;top:486px;width:13px;height:14px;border:1px solid;border-color:#fff #a0a0a0 #a0a0a0 #fff;background:#f0f0f0"></div>
<svg style="position:absolute;left:282px;top:492px" width="7" height="4" viewBox="0 0 7 4" shape-rendering="crispEdges"><path d="M0 0 L7 0 L3.5 3.6 Z" fill="#000" shape-rendering="geometricPrecision"/></svg>
<div style="left:502px;top:428px;width:567px;height:135px;border:1px solid #a0a0a0"></div>
<div style="left:503px;top:429px;width:567px;height:135px;border:1px solid #fff;border-top-color:#fff"></div>
<div style="left:509px;top:426px;width:289px;height:5px;background:#f0f0f0;"></div>
<div class="t" style="left:513px;top:424px;font-size:11px;line-height:11px;color:#000;font-weight:normal;letter-spacing:0px;">Popis události a nastavených filtrů pro zobrazení na webu</div>
<div style="left:504px;top:438px;width:564px;height:124px;border:1px solid;border-color:#a0a0a0 #fff #fff #a0a0a0;background:#fff"></div>
<div style="left:505px;top:439px;width:562px;height:122px;border:1px solid;border-color:#696969 #e3e3e3 #e3e3e3 #696969;background:#fff"></div>
<div style="left:1052px;top:440px;width:16px;height:106px;background:#f0f0f0;"></div>
<svg style="position:absolute;left:0;top:0" width="1080" height="965"><path d="M1056.10 450.80 L1059.50 447.20 L1062.90 450.80" stroke="#a6a6a6" stroke-width="2.1" fill="none"/></svg>
<svg style="position:absolute;left:0;top:0" width="1080" height="965"><path d="M1056.10 535.20 L1059.50 538.80 L1062.90 535.20" stroke="#a6a6a6" stroke-width="2.1" fill="none"/></svg>
<div style="left:506px;top:546px;width:562px;height:16px;background:#f0f0f0;"></div>
<svg style="position:absolute;left:0;top:0" width="1080" height="965"><path d="M515.80 550.10 L512.20 553.50 L515.80 556.90" stroke="#a6a6a6" stroke-width="2.1" fill="none"/></svg>
<svg style="position:absolute;left:0;top:0" width="1080" height="965"><path d="M1040.70 550.10 L1044.30 553.50 L1040.70 556.90" stroke="#a6a6a6" stroke-width="2.1" fill="none"/></svg>
<div class="t" style="left:510px;top:443px;font-size:12px;line-height:12px;color:#000;font-weight:normal;letter-spacing:0.15px;">Den osvobození od fašismu</div>
<div style="left:502px;top:572px;width:567px;height:172px;border:1px solid #a0a0a0"></div>
<div style="left:503px;top:573px;width:567px;height:172px;border:1px solid #fff;border-top-color:#fff"></div>
<div style="left:509px;top:570px;width:309px;height:5px;background:#f0f0f0;"></div>
<div class="t" style="left:512px;top:568px;font-size:11px;line-height:11px;color:#000;font-weight:normal;letter-spacing:0px;">Anglický popis události a nastavených filtrů pro zobr. na webu</div>
<div style="left:504px;top:582px;width:564px;height:161px;border:1px solid;border-color:#a0a0a0 #fff #fff #a0a0a0;background:#fff"></div>
<div style="left:505px;top:583px;width:562px;height:159px;border:1px solid;border-color:#696969 #e3e3e3 #e3e3e3 #696969;background:#fff"></div>
<div style="left:1052px;top:584px;width:16px;height:143px;background:#f0f0f0;"></div>
<svg style="position:absolute;left:0;top:0" width="1080" height="965"><path d="M1056.10 594.80 L1059.50 591.20 L1062.90 594.80" stroke="#a6a6a6" stroke-width="2.1" fill="none"/></svg>
<svg style="position:absolute;left:0;top:0" width="1080" height="965"><path d="M1056.10 716.20 L1059.50 719.80 L1062.90 716.20" stroke="#a6a6a6" stroke-width="2.1" fill="none"/></svg>
<div style="left:506px;top:727px;width:562px;height:16px;background:#f0f0f0;"></div>
<svg style="position:absolute;left:0;top:0" width="1080" height="965"><path d="M515.80 731.10 L512.20 734.50 L515.80 737.90" stroke="#a6a6a6" stroke-width="2.1" fill="none"/></svg>
<svg style="position:absolute;left:0;top:0" width="1080" height="965"><path d="M1040.70 731.10 L1044.30 734.50 L1040.70 737.90" stroke="#a6a6a6" stroke-width="2.1" fill="none"/></svg>
<div class="t" style="right:1009px;top:602px;font-size:11px;line-height:11px;color:#000;letter-spacing:-0.2px;">Akad. rok</div>
<div style="left:78px;top:597px;width:58px;height:20px;border:1px solid;border-color:#a0a0a0 #fff #fff #a0a0a0;background:#fff"></div>
<div style="left:79px;top:598px;width:56px;height:18px;border:1px solid;border-color:#696969 #e3e3e3 #e3e3e3 #696969;background:#fff"></div>
<div style="left:119px;top:599px;width:15px;height:16px;border:1px solid;border-color:#e3e3e3 #696969 #696969 #e3e3e3;background:#f0f0f0"></div>
<div style="left:120px;top:600px;width:13px;height:14px;border:1px solid;border-color:#fff #a0a0a0 #a0a0a0 #fff;background:#f0f0f0"></div>
<svg style="position:absolute;left:124px;top:606px" width="7" height="4" viewBox="0 0 7 4" shape-rendering="crispEdges"><path d="M0 0 L7 0 L3.5 3.6 Z" fill="#000" shape-rendering="geometricPrecision"/></svg>
<div class="t" style="left:82px;top:603px;font-size:11px;line-height:11px;color:#000;font-weight:normal;letter-spacing:-0.1px;">2007</div>
<div style="left:147px;top:595px;width:175px;height:26px;border:1px solid #a0a0a0"></div>
<div style="left:148px;top:596px;width:175px;height:26px;border:1px solid #fff;border-top-color:#fff"></div>
<div style="left:155px;top:593px;width:46px;height:5px;background:#f0f0f0;"></div>
<div class="t" style="left:158px;top:591px;font-size:11px;line-height:11px;color:#000;font-weight:normal;letter-spacing:-0.1px;">Semestr</div>
<svg style="position:absolute;left:153px;top:604px" width="12" height="12" viewBox="0 0 12 12" shape-rendering="crispEdges"><path d="M4 2h1v1h-1zM5 2h1v1h-1zM6 2h1v1h-1zM7 2h1v1h-1zM3 3h1v1h-1zM4 3h1v1h-1zM5 3h1v1h-1zM6 3h1v1h-1zM7 3h1v1h-1zM8 3h1v1h-1zM2 4h1v1h-1zM3 4h1v1h-1zM4 4h1v1h-1zM5 4h1v1h-1zM6 4h1v1h-1zM7 4h1v1h-1zM8 4h1v1h-1zM9 4h1v1h-1zM2 5h1v1h-1zM3 5h1v1h-1zM4 5h1v1h-1zM5 5h1v1h-1zM6 5h1v1h-1zM7 5h1v1h-1zM8 5h1v1h-1zM9 5h1v1h-1zM2 6h1v1h-1zM3 6h1v1h-1zM4 6h1v1h-1zM5 6h1v1h-1zM6 6h1v1h-1zM7 6h1v1h-1zM8 6h1v1h-1zM9 6h1v1h-1zM2 7h1v1h-1zM3 7h1v1h-1zM4 7h1v1h-1zM5 7h1v1h-1zM6 7h1v1h-1zM7 7h1v1h-1zM8 7h1v1h-1zM9 7h1v1h-1zM3 8h1v1h-1zM4 8h1v1h-1zM5 8h1v1h-1zM6 8h1v1h-1zM7 8h1v1h-1zM8 8h1v1h-1zM4 9h1v1h-1zM5 9h1v1h-1zM6 9h1v1h-1zM7 9h1v1h-1z" fill="#fff"/><path d="M4 0h1v1h-1zM5 0h1v1h-1zM6 0h1v1h-1zM7 0h1v1h-1zM2 1h1v1h-1zM3 1h1v1h-1zM8 1h1v1h-1zM9 1h1v1h-1zM1 2h1v1h-1zM1 3h1v1h-1zM0 4h1v1h-1zM0 5h1v1h-1zM0 6h1v1h-1zM0 7h1v1h-1zM1 8h1v1h-1zM1 9h1v1h-1z" fill="#a0a0a0"/><path d="M4 1h1v1h-1zM5 1h1v1h-1zM6 1h1v1h-1zM7 1h1v1h-1zM2 2h1v1h-1zM3 2h1v1h-1zM8 2h1v1h-1zM9 2h1v1h-1zM2 3h1v1h-1zM1 4h1v1h-1zM1 5h1v1h-1zM1 6h1v1h-1zM1 7h1v1h-1z" fill="#696969"/><path d="M9 3h1v1h-1zM10 4h1v1h-1zM10 5h1v1h-1zM10 6h1v1h-1zM10 7h1v1h-1zM2 8h1v1h-1zM9 8h1v1h-1zM2 9h1v1h-1zM3 9h1v1h-1zM8 9h1v1h-1zM9 9h1v1h-1zM4 10h1v1h-1zM5 10h1v1h-1zM6 10h1v1h-1zM7 10h1v1h-1z" fill="#e3e3e3"/><path d="M10 2h1v1h-1zM10 3h1v1h-1zM11 4h1v1h-1zM11 5h1v1h-1zM11 6h1v1h-1zM11 7h1v1h-1zM10 8h1v1h-1zM10 9h1v1h-1zM2 10h1v1h-1zM3 10h1v1h-1zM8 10h1v1h-1zM9 10h1v1h-1zM4 11h1v1h-1zM5 11h1v1h-1zM6 11h1v1h-1zM7 11h1v1h-1z" fill="#ffffff"/></svg>
<div class="t" style="left:171px;top:605px;font-size:11px;line-height:11px;color:#000;font-weight:normal;letter-spacing:-0.1px;">zimní</div>
<svg style="position:absolute;left:213px;top:604px" width="12" height="12" viewBox="0 0 12 12" shape-rendering="crispEdges"><path d="M4 2h1v1h-1zM5 2h1v1h-1zM6 2h1v1h-1zM7 2h1v1h-1zM3 3h1v1h-1zM4 3h1v1h-1zM5 3h1v1h-1zM6 3h1v1h-1zM7 3h1v1h-1zM8 3h1v1h-1zM2 4h1v1h-1zM3 4h1v1h-1zM4 4h1v1h-1zM5 4h1v1h-1zM6 4h1v1h-1zM7 4h1v1h-1zM8 4h1v1h-1zM9 4h1v1h-1zM2 5h1v1h-1zM3 5h1v1h-1zM4 5h1v1h-1zM5 5h1v1h-1zM6 5h1v1h-1zM7 5h1v1h-1zM8 5h1v1h-1zM9 5h1v1h-1zM2 6h1v1h-1zM3 6h1v1h-1zM4 6h1v1h-1zM5 6h1v1h-1zM6 6h1v1h-1zM7 6h1v1h-1zM8 6h1v1h-1zM9 6h1v1h-1zM2 7h1v1h-1zM3 7h1v1h-1zM4 7h1v1h-1zM5 7h1v1h-1zM6 7h1v1h-1zM7 7h1v1h-1zM8 7h1v1h-1zM9 7h1v1h-1zM3 8h1v1h-1zM4 8h1v1h-1zM5 8h1v1h-1zM6 8h1v1h-1zM7 8h1v1h-1zM8 8h1v1h-1zM4 9h1v1h-1zM5 9h1v1h-1zM6 9h1v1h-1zM7 9h1v1h-1z" fill="#fff"/><path d="M4 0h1v1h-1zM5 0h1v1h-1zM6 0h1v1h-1zM7 0h1v1h-1zM2 1h1v1h-1zM3 1h1v1h-1zM8 1h1v1h-1zM9 1h1v1h-1zM1 2h1v1h-1zM1 3h1v1h-1zM0 4h1v1h-1zM0 5h1v1h-1zM0 6h1v1h-1zM0 7h1v1h-1zM1 8h1v1h-1zM1 9h1v1h-1z" fill="#a0a0a0"/><path d="M4 1h1v1h-1zM5 1h1v1h-1zM6 1h1v1h-1zM7 1h1v1h-1zM2 2h1v1h-1zM3 2h1v1h-1zM8 2h1v1h-1zM9 2h1v1h-1zM2 3h1v1h-1zM1 4h1v1h-1zM1 5h1v1h-1zM1 6h1v1h-1zM1 7h1v1h-1z" fill="#696969"/><path d="M9 3h1v1h-1zM10 4h1v1h-1zM10 5h1v1h-1zM10 6h1v1h-1zM10 7h1v1h-1zM2 8h1v1h-1zM9 8h1v1h-1zM2 9h1v1h-1zM3 9h1v1h-1zM8 9h1v1h-1zM9 9h1v1h-1zM4 10h1v1h-1zM5 10h1v1h-1zM6 10h1v1h-1zM7 10h1v1h-1z" fill="#e3e3e3"/><path d="M10 2h1v1h-1zM10 3h1v1h-1zM11 4h1v1h-1zM11 5h1v1h-1zM11 6h1v1h-1zM11 7h1v1h-1zM10 8h1v1h-1zM10 9h1v1h-1zM2 10h1v1h-1zM3 10h1v1h-1zM8 10h1v1h-1zM9 10h1v1h-1zM4 11h1v1h-1zM5 11h1v1h-1zM6 11h1v1h-1zM7 11h1v1h-1z" fill="#ffffff"/><path d="M5 4h1v1h-1zM6 4h1v1h-1zM4 5h1v1h-1zM5 5h1v1h-1zM6 5h1v1h-1zM7 5h1v1h-1zM4 6h1v1h-1zM5 6h1v1h-1zM6 6h1v1h-1zM7 6h1v1h-1zM5 7h1v1h-1zM6 7h1v1h-1z" fill="#000"/></svg>
<div class="t" style="left:231px;top:605px;font-size:11px;line-height:11px;color:#000;font-weight:normal;letter-spacing:-0.1px;">letní</div>
<svg style="position:absolute;left:262px;top:604px" width="12" height="12" viewBox="0 0 12 12" shape-rendering="crispEdges"><path d="M4 2h1v1h-1zM5 2h1v1h-1zM6 2h1v1h-1zM7 2h1v1h-1zM3 3h1v1h-1zM4 3h1v1h-1zM5 3h1v1h-1zM6 3h1v1h-1zM7 3h1v1h-1zM8 3h1v1h-1zM2 4h1v1h-1zM3 4h1v1h-1zM4 4h1v1h-1zM5 4h1v1h-1zM6 4h1v1h-1zM7 4h1v1h-1zM8 4h1v1h-1zM9 4h1v1h-1zM2 5h1v1h-1zM3 5h1v1h-1zM4 5h1v1h-1zM5 5h1v1h-1zM6 5h1v1h-1zM7 5h1v1h-1zM8 5h1v1h-1zM9 5h1v1h-1zM2 6h1v1h-1zM3 6h1v1h-1zM4 6h1v1h-1zM5 6h1v1h-1zM6 6h1v1h-1zM7 6h1v1h-1zM8 6h1v1h-1zM9 6h1v1h-1zM2 7h1v1h-1zM3 7h1v1h-1zM4 7h1v1h-1zM5 7h1v1h-1zM6 7h1v1h-1zM7 7h1v1h-1zM8 7h1v1h-1zM9 7h1v1h-1zM3 8h1v1h-1zM4 8h1v1h-1zM5 8h1v1h-1zM6 8h1v1h-1zM7 8h1v1h-1zM8 8h1v1h-1zM4 9h1v1h-1zM5 9h1v1h-1zM6 9h1v1h-1zM7 9h1v1h-1z" fill="#fff"/><path d="M4 0h1v1h-1zM5 0h1v1h-1zM6 0h1v1h-1zM7 0h1v1h-1zM2 1h1v1h-1zM3 1h1v1h-1zM8 1h1v1h-1zM9 1h1v1h-1zM1 2h1v1h-1zM1 3h1v1h-1zM0 4h1v1h-1zM0 5h1v1h-1zM0 6h1v1h-1zM0 7h1v1h-1zM1 8h1v1h-1zM1 9h1v1h-1z" fill="#a0a0a0"/><path d="M4 1h1v1h-1zM5 1h1v1h-1zM6 1h1v1h-1zM7 1h1v1h-1zM2 2h1v1h-1zM3 2h1v1h-1zM8 2h1v1h-1zM9 2h1v1h-1zM2 3h1v1h-1zM1 4h1v1h-1zM1 5h1v1h-1zM1 6h1v1h-1zM1 7h1v1h-1z" fill="#696969"/><path d="M9 3h1v1h-1zM10 4h1v1h-1zM10 5h1v1h-1zM10 6h1v1h-1zM10 7h1v1h-1zM2 8h1v1h-1zM9 8h1v1h-1zM2 9h1v1h-1zM3 9h1v1h-1zM8 9h1v1h-1zM9 9h1v1h-1zM4 10h1v1h-1zM5 10h1v1h-1zM6 10h1v1h-1zM7 10h1v1h-1z" fill="#e3e3e3"/><path d="M10 2h1v1h-1zM10 3h1v1h-1zM11 4h1v1h-1zM11 5h1v1h-1zM11 6h1v1h-1zM11 7h1v1h-1zM10 8h1v1h-1zM10 9h1v1h-1zM2 10h1v1h-1zM3 10h1v1h-1zM8 10h1v1h-1zM9 10h1v1h-1zM4 11h1v1h-1zM5 11h1v1h-1zM6 11h1v1h-1zM7 11h1v1h-1z" fill="#ffffff"/></svg>
<div class="t" style="left:279px;top:605px;font-size:11px;line-height:11px;color:#a0a0a0;font-weight:normal;letter-spacing:-0.1px;">celý rok</div>
<div class="t" style="right:1009px;top:630px;font-size:11px;line-height:11px;color:#000;letter-spacing:-0.1px;">Od</div>
<div style="left:78px;top:625px;width:113px;height:20px;border:1px solid;border-color:#a0a0a0 #fff #fff #a0a0a0;background:#fff"></div>
<div style="left:79px;top:626px;width:111px;height:18px;border:1px solid;border-color:#696969 #e3e3e3 #e3e3e3 #696969;background:#fff"></div>
<div class="t" style="left:81px;top:630px;font-size:11px;line-height:11px;color:#6d6d6d;font-weight:normal;letter-spacing:-0.1px;">08.05.2008</div>
<div style="left:198px;top:624px;width:26px;height:24px;border:1px solid;border-color:#fff #696969 #696969 #fff;background:#f0f0f0"></div>
<div style="left:199px;top:625px;width:24px;height:22px;border:1px solid;border-color:#e3e3e3 #a0a0a0 #a0a0a0 #e3e3e3;background:#f0f0f0"></div>
<svg style="position:absolute;left:201px;top:625px" width="22" height="22" viewBox="0 0 22 22" shape-rendering="crispEdges"><path d="M5 4h1v1h-1zM6 5h1v1h-1zM7 6h1v1h-1zM15 14h1v1h-1zM16 15h1v1h-1zM17 16h1v1h-1zM4 5h1v1h-1zM5 6h1v1h-1zM14 15h1v1h-1zM15 16h1v1h-1z" fill="#c8c8e0"/><path d="M10 3h1v1h-1zM10 4h1v1h-1zM10 5h1v1h-1zM10 15h1v1h-1zM10 16h1v1h-1zM10 17h1v1h-1zM3 10h1v1h-1zM4 10h1v1h-1zM5 10h1v1h-1zM15 10h1v1h-1zM16 10h1v1h-1zM17 10h1v1h-1zM4 4h1v1h-1zM5 5h1v1h-1zM6 6h1v1h-1zM16 4h1v1h-1zM15 5h1v1h-1zM14 6h1v1h-1zM4 16h1v1h-1zM5 15h1v1h-1zM6 14h1v1h-1zM14 14h1v1h-1zM15 15h1v1h-1zM16 16h1v1h-1zM8 7h1v1h-1zM9 7h1v1h-1zM10 7h1v1h-1zM11 7h1v1h-1zM12 7h1v1h-1zM7 8h1v1h-1zM8 8h1v1h-1zM9 8h1v1h-1zM10 8h1v1h-1zM11 8h1v1h-1zM12 8h1v1h-1zM13 8h1v1h-1zM7 9h1v1h-1zM8 9h1v1h-1zM9 9h1v1h-1zM10 9h1v1h-1zM11 9h1v1h-1zM12 9h1v1h-1zM13 9h1v1h-1zM7 10h1v1h-1zM8 10h1v1h-1zM9 10h1v1h-1zM10 10h1v1h-1zM11 10h1v1h-1zM12 10h1v1h-1zM13 10h1v1h-1zM7 11h1v1h-1zM8 11h1v1h-1zM9 11h1v1h-1zM10 11h1v1h-1zM11 11h1v1h-1zM12 11h1v1h-1zM13 11h1v1h-1zM8 12h1v1h-1zM9 12h1v1h-1zM10 12h1v1h-1zM11 12h1v1h-1zM12 12h1v1h-1zM13 12h1v1h-1zM9 13h1v1h-1zM10 13h1v1h-1zM11 13h1v1h-1zM12 13h1v1h-1z" fill="#ffff00"/><path d="M11 4h1v1h-1zM11 5h1v1h-1zM11 6h1v1h-1zM11 16h1v1h-1zM11 17h1v1h-1zM11 18h1v1h-1zM4 11h1v1h-1zM5 11h1v1h-1zM6 11h1v1h-1zM16 11h1v1h-1zM17 11h1v1h-1zM18 11h1v1h-1zM7 7h1v1h-1zM17 5h1v1h-1zM16 6h1v1h-1zM15 7h1v1h-1zM5 17h1v1h-1zM6 16h1v1h-1zM7 15h1v1h-1zM17 17h1v1h-1zM14 10h1v1h-1zM14 11h1v1h-1zM14 12h1v1h-1zM13 13h1v1h-1zM12 14h1v1h-1zM11 14h1v1h-1zM10 14h1v1h-1z" fill="#000"/></svg>
<div class="t" style="left:232px;top:628px;font-size:11px;line-height:11px;color:#000;font-weight:normal;letter-spacing:-0.5px;">***</div>
<div class="t" style="right:1009px;top:658px;font-size:11px;line-height:11px;color:#000;letter-spacing:-0.1px;">Do</div>
<div style="left:78px;top:653px;width:114px;height:20px;border:1px solid;border-color:#a0a0a0 #fff #fff #a0a0a0;background:#fff"></div>
<div style="left:79px;top:654px;width:112px;height:18px;border:1px solid;border-color:#696969 #e3e3e3 #e3e3e3 #696969;background:#fff"></div>
<div class="t" style="left:81px;top:658px;font-size:11px;line-height:11px;color:#6d6d6d;font-weight:normal;letter-spacing:-0.1px;">08.05.2008 23:59:59</div>
<div style="left:198px;top:650px;width:26px;height:26px;border:1px solid;border-color:#fff #696969 #696969 #fff;background:#f0f0f0"></div>
<div style="left:199px;top:651px;width:24px;height:24px;border:1px solid;border-color:#e3e3e3 #a0a0a0 #a0a0a0 #e3e3e3;background:#f0f0f0"></div>
<svg style="position:absolute;left:201px;top:653px" width="22" height="22" viewBox="0 0 22 22" shape-rendering="crispEdges"><path d="M5 4h1v1h-1zM6 5h1v1h-1zM7 6h1v1h-1zM15 14h1v1h-1zM16 15h1v1h-1zM17 16h1v1h-1zM4 5h1v1h-1zM5 6h1v1h-1zM14 15h1v1h-1zM15 16h1v1h-1z" fill="#c8c8e0"/><path d="M10 3h1v1h-1zM10 4h1v1h-1zM10 5h1v1h-1zM10 15h1v1h-1zM10 16h1v1h-1zM10 17h1v1h-1zM3 10h1v1h-1zM4 10h1v1h-1zM5 10h1v1h-1zM15 10h1v1h-1zM16 10h1v1h-1zM17 10h1v1h-1zM4 4h1v1h-1zM5 5h1v1h-1zM6 6h1v1h-1zM16 4h1v1h-1zM15 5h1v1h-1zM14 6h1v1h-1zM4 16h1v1h-1zM5 15h1v1h-1zM6 14h1v1h-1zM14 14h1v1h-1zM15 15h1v1h-1zM16 16h1v1h-1zM8 7h1v1h-1zM9 7h1v1h-1zM10 7h1v1h-1zM11 7h1v1h-1zM12 7h1v1h-1zM7 8h1v1h-1zM8 8h1v1h-1zM9 8h1v1h-1zM10 8h1v1h-1zM11 8h1v1h-1zM12 8h1v1h-1zM13 8h1v1h-1zM7 9h1v1h-1zM8 9h1v1h-1zM9 9h1v1h-1zM10 9h1v1h-1zM11 9h1v1h-1zM12 9h1v1h-1zM13 9h1v1h-1zM7 10h1v1h-1zM8 10h1v1h-1zM9 10h1v1h-1zM10 10h1v1h-1zM11 10h1v1h-1zM12 10h1v1h-1zM13 10h1v1h-1zM7 11h1v1h-1zM8 11h1v1h-1zM9 11h1v1h-1zM10 11h1v1h-1zM11 11h1v1h-1zM12 11h1v1h-1zM13 11h1v1h-1zM8 12h1v1h-1zM9 12h1v1h-1zM10 12h1v1h-1zM11 12h1v1h-1zM12 12h1v1h-1zM13 12h1v1h-1zM9 13h1v1h-1zM10 13h1v1h-1zM11 13h1v1h-1zM12 13h1v1h-1z" fill="#ffff00"/><path d="M11 4h1v1h-1zM11 5h1v1h-1zM11 6h1v1h-1zM11 16h1v1h-1zM11 17h1v1h-1zM11 18h1v1h-1zM4 11h1v1h-1zM5 11h1v1h-1zM6 11h1v1h-1zM16 11h1v1h-1zM17 11h1v1h-1zM18 11h1v1h-1zM7 7h1v1h-1zM17 5h1v1h-1zM16 6h1v1h-1zM15 7h1v1h-1zM5 17h1v1h-1zM6 16h1v1h-1zM7 15h1v1h-1zM17 17h1v1h-1zM14 10h1v1h-1zM14 11h1v1h-1zM14 12h1v1h-1zM13 13h1v1h-1zM12 14h1v1h-1zM11 14h1v1h-1zM10 14h1v1h-1z" fill="#000"/></svg>
<div class="t" style="left:232px;top:656px;font-size:11px;line-height:11px;color:#000;font-weight:normal;letter-spacing:-0.5px;">***</div>
<div style="left:30px;top:652px;width:22px;height:21px;border:1px solid;border-color:#fff #696969 #696969 #fff;background:#f0f0f0"></div>
<div style="left:31px;top:653px;width:20px;height:19px;border:1px solid;border-color:#e3e3e3 #a0a0a0 #a0a0a0 #e3e3e3;background:#f0f0f0"></div>
<svg style="position:absolute;left:30px;top:652px" width="24" height="23" viewBox="0 0 24 23" shape-rendering="crispEdges"><g shape-rendering="geometricPrecision" fill="none" stroke-linejoin="miter"><path d="M8 7.5 L11 5.5 L15.5 5.5 L17 7 L17 9 L12 13.5 L12 15.5" transform="translate(0.9 0.9)" stroke="#000080" stroke-width="3"/><path d="M8 7.5 L11 5.5 L15.5 5.5 L17 7 L17 9 L12 13.5 L12 15.5" stroke="#008080" stroke-width="3"/><path d="M7.4 6.9 L10.6 4.8 L15.2 4.8" stroke="#00ffff" stroke-width="1.2"/><path d="M16.2 9 L11.2 13.4 L11.2 15" stroke="#00ffff" stroke-width="1.1"/><rect x="10.9" y="18" width="3" height="3" fill="#000080"/><rect x="10" y="17" width="3" height="3" fill="#008080"/><rect x="10" y="17" width="2" height="1" fill="#00ffff"/></g></svg>
<div style="left:19px;top:712px;width:11px;height:11px;border:1px solid;border-color:#a0a0a0 #fff #fff #a0a0a0;background:#fff"></div>
<div style="left:20px;top:713px;width:9px;height:9px;border:1px solid;border-color:#696969 #e3e3e3 #e3e3e3 #696969;background:#fff"></div>
<div class="t" style="left:38px;top:706px;font-size:11px;line-height:11px;color:#000;font-weight:normal;letter-spacing:-0.16px;">publikovat událost na</div>
<div class="t" style="left:38px;top:720px;font-size:11px;line-height:11px;color:#000;font-weight:normal;letter-spacing:-0.16px;">webu</div>
<div style="left:206px;top:711px;width:11px;height:11px;border:1px solid;border-color:#a0a0a0 #fff #fff #a0a0a0;background:#fff"></div>
<div style="left:207px;top:712px;width:9px;height:9px;border:1px solid;border-color:#696969 #e3e3e3 #e3e3e3 #696969;background:#fff"></div>
<svg style="position:absolute;left:209px;top:714px" width="7" height="7" viewBox="0 0 7 7" shape-rendering="crispEdges"><path d="M0 2.5 L2.5 5 L7 0.5" stroke="#000" stroke-width="1.8" fill="none" shape-rendering="geometricPrecision"/></svg>
<div class="t" style="left:224px;top:712px;font-size:11px;line-height:11px;color:#000;font-weight:normal;letter-spacing:0px;">na webu zobrazovat datum</div>
<div class="t" style="left:21px;top:732px;font-size:12px;line-height:12px;color:#ff0000;font-weight:bold;letter-spacing:0px;">! Datum bez času (20.07.2007) znamená 20.07.2007 0:00:00 !</div>
<div style="left:7px;top:747px;width:1065px;height:99px;border:1px solid;border-color:#a0a0a0 #fff #fff #a0a0a0;background:#fff"></div>
<div style="left:8px;top:748px;width:1063px;height:97px;border:1px solid;border-color:#696969 #e3e3e3 #e3e3e3 #696969;background:#fff"></div>
<div style="left:9px;top:749px;width:11px;height:19px;background:#f0f0f0;"></div>
<div style="left:9px;top:749px;width:11px;height:1px;background:#fff;"></div>
<div style="left:9px;top:749px;width:1px;height:19px;background:#fff;"></div>
<div style="left:20px;top:749px;width:1px;height:39px;background:#000;"></div>
<div style="left:21px;top:749px;width:64px;height:19px;background:#f0f0f0;"></div>
<div style="left:21px;top:749px;width:64px;height:1px;background:#fff;"></div>
<div style="left:21px;top:749px;width:1px;height:19px;background:#fff;"></div>
<div style="left:85px;top:749px;width:1px;height:39px;background:#000;"></div>
<div class="t" style="left:23px;top:754px;font-size:11px;line-height:11px;color:#000;font-weight:normal;letter-spacing:-0.2px;">Tabulka</div>
<div style="left:86px;top:749px;width:244px;height:19px;background:#f0f0f0;"></div>
<div style="left:86px;top:749px;width:244px;height:1px;background:#fff;"></div>
<div style="left:86px;top:749px;width:1px;height:19px;background:#fff;"></div>
<div style="left:330px;top:749px;width:1px;height:39px;background:#000;"></div>
<div class="t" style="left:88px;top:754px;font-size:11px;line-height:11px;color:#000;font-weight:normal;letter-spacing:-0.2px;">Popis</div>
<div style="left:331px;top:749px;width:740px;height:19px;background:#f0f0f0;"></div>
<div style="left:331px;top:749px;width:740px;height:1px;background:#fff;"></div>
<div style="left:331px;top:749px;width:1px;height:19px;background:#fff;"></div>
<div class="t" style="left:333px;top:754px;font-size:11px;line-height:11px;color:#000;font-weight:normal;letter-spacing:-0.2px;">Filtr</div>
<div style="left:9px;top:768px;width:1062px;height:1px;background:#000;"></div>
<div style="left:9px;top:769px;width:11px;height:18px;background:#f0f0f0;"></div>
<div style="left:9px;top:769px;width:11px;height:1px;background:#fff;"></div>
<div style="left:9px;top:769px;width:1px;height:18px;background:#fff;"></div>
<div style="left:9px;top:787px;width:12px;height:1px;background:#000;"></div>
<div style="left:21px;top:787px;width:1050px;height:1px;background:#c0c0c0;"></div>
<div style="left:85px;top:769px;width:1px;height:19px;background:#c0c0c0;"></div>
<div style="left:330px;top:769px;width:1px;height:19px;background:#c0c0c0;"></div>
<svg style="position:absolute;left:12px;top:773px" width="6" height="10" viewBox="0 0 6 10" shape-rendering="crispEdges"><path d="M0 0 L5 5 L0 10 Z" fill="#000"/></svg>
<div style="left:9px;top:830px;width:1062px;height:16px;background:#f0f0f0;"></div>
<svg style="position:absolute;left:0;top:0" width="1080" height="965"><path d="M19.00 834.10 L15.40 837.50 L19.00 840.90" stroke="#606060" stroke-width="2.1" fill="none"/></svg>
<div style="left:26px;top:830px;width:17px;height:15px;background:#cdcdcd;"></div>
<svg style="position:absolute;left:0;top:0" width="1080" height="965"><path d="M1061.20 834.10 L1064.80 837.50 L1061.20 840.90" stroke="#606060" stroke-width="2.1" fill="none"/></svg>
<div style="left:3px;top:852px;width:1074px;height:1px;background:#ffffff;"></div>
<div style="left:1px;top:856px;width:1078px;height:1px;background:#e3e3e3;"></div>
<div style="left:1px;top:857px;width:1078px;height:106px;background:#f0f0f0;"></div>
<div style="left:1px;top:857px;width:1078px;height:1px;background:#ffffff;"></div>
<div style="left:1px;top:857px;width:1px;height:106px;background:#ffffff;"></div>
<div style="left:1077px;top:857px;width:1px;height:106px;background:#ffffff;"></div>
<div style="left:1078px;top:857px;width:1px;height:108px;background:#9a9a9a;"></div>
<div style="left:1px;top:962px;width:1077px;height:1px;background:#ffffff;"></div>
<div style="left:0px;top:963px;width:1080px;height:1px;background:#969696;"></div>
<div style="left:0px;top:964px;width:1080px;height:1px;background:#969696;"></div>
<div style="left:38px;top:864px;width:70px;height:25px;border:1px solid;border-color:#fff #696969 #696969 #fff;background:#f0f0f0"></div>
<div style="left:39px;top:865px;width:68px;height:23px;border:1px solid;border-color:#e3e3e3 #a0a0a0 #a0a0a0 #e3e3e3;background:#f0f0f0"></div>
<div class="t" style="left:38px;width:72px;text-align:center;top:872px;font-size:11px;line-height:11px;color:#000;font-weight:normal;letter-spacing:-0.1px;">Přidat</div>
<div style="left:188px;top:863px;width:70px;height:25px;border:1px solid;border-color:#fff #696969 #696969 #fff;background:#f0f0f0"></div>
<div style="left:189px;top:864px;width:68px;height:23px;border:1px solid;border-color:#e3e3e3 #a0a0a0 #a0a0a0 #e3e3e3;background:#f0f0f0"></div>
<div class="t" style="left:188px;width:72px;text-align:center;top:871px;font-size:11px;line-height:11px;color:#000;font-weight:normal;letter-spacing:-0.1px;">Opravit</div>
<div style="left:263px;top:864px;width:70px;height:25px;border:1px solid;border-color:#fff #696969 #696969 #fff;background:#f0f0f0"></div>
<div style="left:264px;top:865px;width:68px;height:23px;border:1px solid;border-color:#e3e3e3 #a0a0a0 #a0a0a0 #e3e3e3;background:#f0f0f0"></div>
<div class="t" style="left:263px;width:72px;text-align:center;top:872px;font-size:11px;line-height:11px;color:#000;font-weight:normal;letter-spacing:-0.1px;">Vymazat</div>
<div style="left:424px;top:864px;width:112px;height:25px;border:1px solid;border-color:#fff #696969 #696969 #fff;background:#f0f0f0"></div>
<div style="left:425px;top:865px;width:110px;height:23px;border:1px solid;border-color:#e3e3e3 #a0a0a0 #a0a0a0 #e3e3e3;background:#f0f0f0"></div>
<div class="t" style="left:424px;width:114px;text-align:center;top:872px;font-size:11px;line-height:11px;color:#000;font-weight:normal;letter-spacing:-0.1px;">Kopie události</div>
<div style="left:560px;top:864px;width:70px;height:25px;border:1px solid;border-color:#fff #696969 #696969 #fff;background:#f0f0f0"></div>
<div style="left:561px;top:865px;width:68px;height:23px;border:1px solid;border-color:#e3e3e3 #a0a0a0 #a0a0a0 #e3e3e3;background:#f0f0f0"></div>
<div class="t" style="left:560px;width:72px;text-align:center;top:872px;font-size:11px;line-height:11px;color:#000;font-weight:normal;letter-spacing:-0.1px;">Hr. kontrola</div>
<div style="left:636px;top:864px;width:70px;height:25px;border:1px solid;border-color:#fff #696969 #696969 #fff;background:#f0f0f0"></div>
<div style="left:637px;top:865px;width:68px;height:23px;border:1px solid;border-color:#e3e3e3 #a0a0a0 #a0a0a0 #e3e3e3;background:#f0f0f0"></div>
<div class="t" style="left:636px;width:72px;text-align:center;top:872px;font-size:11px;line-height:11px;color:#000;font-weight:normal;letter-spacing:-0.1px;">Hr. publikace</div>
<div style="left:38px;top:897px;width:70px;height:25px;border:1px solid;border-color:#fff #696969 #696969 #fff;background:#f0f0f0"></div>
<div style="left:39px;top:898px;width:68px;height:23px;border:1px solid;border-color:#e3e3e3 #a0a0a0 #a0a0a0 #e3e3e3;background:#f0f0f0"></div>
<div class="t" style="left:38px;width:72px;text-align:center;top:905px;font-size:11px;line-height:11px;color:#a0a0a0;font-weight:normal;letter-spacing:-0.1px;">F.- studenti</div>
<div style="left:113px;top:897px;width:70px;height:25px;border:1px solid;border-color:#fff #696969 #696969 #fff;background:#f0f0f0"></div>
<div style="left:114px;top:898px;width:68px;height:23px;border:1px solid;border-color:#e3e3e3 #a0a0a0 #a0a0a0 #e3e3e3;background:#f0f0f0"></div>
<div class="t" style="left:113px;width:72px;text-align:center;top:905px;font-size:11px;line-height:11px;color:#a0a0a0;font-weight:normal;letter-spacing:-0.1px;">F.- učitelé</div>
<div style="left:188px;top:897px;width:70px;height:25px;border:1px solid;border-color:#fff #696969 #696969 #fff;background:#f0f0f0"></div>
<div style="left:189px;top:898px;width:68px;height:23px;border:1px solid;border-color:#e3e3e3 #a0a0a0 #a0a0a0 #e3e3e3;background:#f0f0f0"></div>
<div class="t" style="left:188px;width:72px;text-align:center;top:905px;font-size:11px;line-height:11px;color:#a0a0a0;font-weight:normal;letter-spacing:-0.1px;">F.- předměty</div>
<div style="left:263px;top:897px;width:70px;height:25px;border:1px solid;border-color:#fff #696969 #696969 #fff;background:#f0f0f0"></div>
<div style="left:264px;top:898px;width:68px;height:23px;border:1px solid;border-color:#e3e3e3 #a0a0a0 #a0a0a0 #e3e3e3;background:#f0f0f0"></div>
<div class="t" style="left:263px;width:72px;text-align:center;top:905px;font-size:11px;line-height:11px;color:#a0a0a0;font-weight:normal;letter-spacing:-0.1px;">F.- uchazeči</div>
<div style="left:338px;top:897px;width:70px;height:25px;border:1px solid;border-color:#fff #696969 #696969 #fff;background:#f0f0f0"></div>
<div style="left:339px;top:898px;width:68px;height:23px;border:1px solid;border-color:#e3e3e3 #a0a0a0 #a0a0a0 #e3e3e3;background:#f0f0f0"></div>
<div class="t" style="left:338px;width:72px;text-align:center;top:905px;font-size:11px;line-height:11px;color:#a0a0a0;font-weight:normal;letter-spacing:-0.1px;">F.- W.Uchaz.</div>
<div style="left:424px;top:897px;width:112px;height:25px;border:1px solid;border-color:#fff #696969 #696969 #fff;background:#f0f0f0"></div>
<div style="left:425px;top:898px;width:110px;height:23px;border:1px solid;border-color:#e3e3e3 #a0a0a0 #a0a0a0 #e3e3e3;background:#f0f0f0"></div>
<div class="t" style="left:424px;width:114px;text-align:center;top:905px;font-size:11px;line-height:11px;color:#000;font-weight:normal;letter-spacing:-0.1px;">Kopie 2007 -> 2008</div>
<div style="left:5px;top:879px;width:25px;height:25px;border:1px solid;border-color:#fff #696969 #696969 #fff;background:#f0f0f0"></div>
<div style="left:6px;top:880px;width:23px;height:23px;border:1px solid;border-color:#e3e3e3 #a0a0a0 #a0a0a0 #e3e3e3;background:#f0f0f0"></div>
<svg style="position:absolute;left:5px;top:879px" width="27" height="27" viewBox="0 0 27 27" shape-rendering="crispEdges"><rect x="18" y="4" width="6" height="7" fill="#000"/><rect x="18" y="5" width="5" height="6" fill="#808000"/><rect x="16" y="6" width="6" height="7" fill="#000"/><rect x="16" y="7" width="5" height="6" fill="#808000"/><rect x="13" y="8" width="7" height="8" fill="#000"/><rect x="13" y="9" width="6" height="7" fill="#808000"/><rect x="10" y="10" width="8" height="9" fill="#000"/><rect x="10" y="11" width="7" height="8" fill="#008080"/><rect x="7" y="12" width="9" height="10" fill="#000"/><rect x="7" y="13" width="8" height="9" fill="#008080"/><rect x="5" y="14" width="9" height="10" fill="#000"/><rect x="5" y="15" width="8" height="9" fill="#008080"/></svg>
<div style="left:834px;top:930px;width:70px;height:25px;border:1px solid;border-color:#fff #696969 #696969 #fff;background:#f0f0f0"></div>
<div style="left:835px;top:931px;width:68px;height:23px;border:1px solid;border-color:#e3e3e3 #a0a0a0 #a0a0a0 #e3e3e3;background:#f0f0f0"></div>
<svg style="position:absolute;left:848px;top:932px" width="24" height="22" viewBox="0 0 24 22" shape-rendering="crispEdges"><path d="M5.5 12.5 L7 11 L10.3 14.3 L19.8 4.8 L21.3 6.3 L21.3 8.3 L10.3 19.3 L5.5 14.5 Z" stroke="#a0a0a0" stroke-width="1" fill="#f4f4f4" shape-rendering="geometricPrecision"/></svg>
<div class="t" style="left:874px;top:939px;font-size:11px;line-height:11px;color:#a0a0a0;font-weight:normal;">OK</div>
<div style="left:874px;top:949px;width:8px;height:1px;background:#a0a0a0;"></div>
<div style="left:912px;top:930px;width:70px;height:25px;border:1px solid;border-color:#fff #696969 #696969 #fff;background:#f0f0f0"></div>
<div style="left:913px;top:931px;width:68px;height:23px;border:1px solid;border-color:#e3e3e3 #a0a0a0 #a0a0a0 #e3e3e3;background:#f0f0f0"></div>
<svg style="position:absolute;left:920px;top:932px" width="22" height="22" viewBox="0 0 22 22" shape-rendering="crispEdges"><path d="M5 5.5 L7 4.5 L11 8.5 L15 4.5 L17.5 5 L17.5 6.5 L13.5 10.5 L13.5 11.5 L17 15 L16.5 17.5 L14.5 18 L11 14.5 L7 18.5 L5 18 L4.5 16 L8.5 12 L8.5 11 L4.5 7 Z" stroke="#a0a0a0" stroke-width="1" fill="#f4f4f4" shape-rendering="geometricPrecision"/></svg>
<div class="t" style="left:943px;top:939px;font-size:11px;line-height:11px;color:#a0a0a0;font-weight:normal;">Návrat</div>
<div style="left:943px;top:949px;width:8px;height:1px;background:#a0a0a0;"></div>
<div style="left:1001px;top:930px;width:71px;height:25px;border:1px solid;border-color:#fff #696969 #696969 #fff;background:#f0f0f0"></div>
<div style="left:1002px;top:931px;width:69px;height:23px;border:1px solid;border-color:#e3e3e3 #a0a0a0 #a0a0a0 #e3e3e3;background:#f0f0f0"></div>
<svg style="position:absolute;left:1012px;top:932px" width="24" height="24" viewBox="0 0 24 24" shape-rendering="crispEdges"><rect x="9" y="3" width="6" height="3" rx="0.8" fill="#000"/><rect x="10" y="4" width="4" height="1" fill="#00ff00"/><rect x="7" y="7" width="10" height="1" fill="#000080"/><rect x="7" y="7" width="1" height="13" fill="#000080"/><rect x="16" y="7" width="1" height="13" fill="#000080"/><rect x="3" y="19" width="5" height="1" fill="#000080"/><rect x="16" y="19" width="5" height="1" fill="#000080"/><rect x="8" y="8" width="3" height="11" fill="#ff00ff"/><rect x="9" y="8" width="1" height="1" fill="#800080"/><rect x="9" y="10" width="1" height="1" fill="#800080"/><rect x="9" y="12" width="1" height="1" fill="#800080"/><rect x="9" y="14" width="1" height="1" fill="#800080"/><rect x="9" y="16" width="1" height="1" fill="#800080"/><rect x="9" y="18" width="1" height="1" fill="#800080"/><rect x="11" y="8" width="1" height="11" fill="#000"/><rect x="12" y="8" width="4" height="11" fill="#ffffff"/><rect x="12" y="8" width="1" height="1" fill="#00ffff"/><rect x="14" y="8" width="1" height="1" fill="#00ffff"/><rect x="13" y="9" width="1" height="1" fill="#00ffff"/><rect x="15" y="9" width="1" height="1" fill="#00ffff"/><rect x="12" y="10" width="1" height="1" fill="#00ffff"/><rect x="14" y="10" width="1" height="1" fill="#00ffff"/><rect x="13" y="11" width="1" height="1" fill="#00ffff"/><rect x="15" y="11" width="1" height="1" fill="#00ffff"/><rect x="12" y="12" width="1" height="1" fill="#00ffff"/><rect x="14" y="12" width="1" height="1" fill="#00ffff"/><rect x="13" y="13" width="1" height="1" fill="#00ffff"/><rect x="15" y="13" width="1" height="1" fill="#00ffff"/><rect x="12" y="14" width="1" height="1" fill="#00ffff"/><rect x="14" y="14" width="1" height="1" fill="#00ffff"/><rect x="13" y="15" width="1" height="1" fill="#00ffff"/><rect x="15" y="15" width="1" height="1" fill="#00ffff"/><rect x="9" y="19" width="6" height="1" fill="#808080"/></svg>
<div class="t" style="left:1037px;top:939px;font-size:11px;line-height:11px;color:#000;font-weight:normal;">Zmiz</div>
<div style="left:1037px;top:949px;width:8px;height:1px;background:#000;"></div>
</body></html>
